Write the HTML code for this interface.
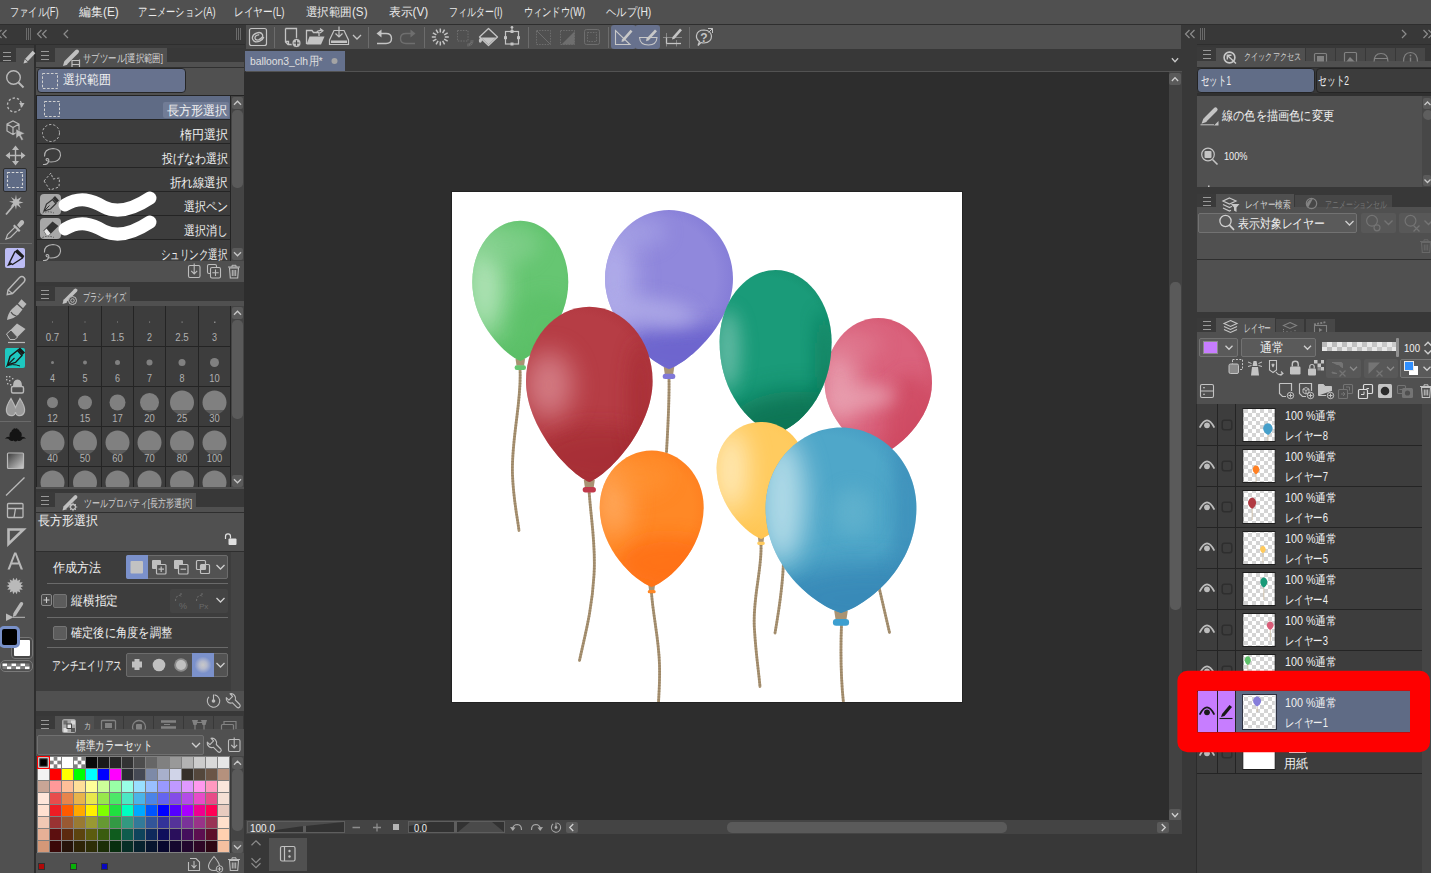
<!DOCTYPE html>
<html lang="ja"><head><meta charset="utf-8"><title>CLIP STUDIO PAINT</title>
<style>
html,body{margin:0;padding:0;background:#383838;}
body{width:1431px;height:873px;overflow:hidden;position:relative;font-family:"Liberation Sans",sans-serif;}
#app{position:absolute;left:0;top:0;width:1431px;height:873px;overflow:hidden;background:#383838;}
#app>div{position:absolute;box-sizing:border-box;}
#ov{position:absolute;left:0;top:0;}
#ov text{font-family:"Liberation Sans",sans-serif;}
</style></head><body>
<div id="app">
<div style="left:0px;top:0px;width:1431px;height:24px;background:#505050;"></div>
<div style="left:0px;top:24px;width:1431px;height:1px;background:#2e2e2e;"></div>
<div style="left:0px;top:44px;width:245px;height:1px;background:#2e2e2e;"></div>
<div style="left:1197px;top:44px;width:234px;height:1px;background:#2e2e2e;"></div>
<div style="left:34px;top:45px;width:2px;height:828px;background:#2e2e2e;"></div>
<div style="left:0px;top:45px;width:34px;height:3px;background:#3a3a3a;"></div>
<div style="left:0px;top:48px;width:34px;height:825px;background:#505050;"></div>
<div style="left:0px;top:48px;width:16px;height:14px;background:#3a3a3a;"></div>
<div style="left:3px;top:168px;width:24px;height:24px;background:#5f6b85;border:1px solid #2c2c2c;border-radius:2px;"></div>
<div style="left:0px;top:243px;width:32px;height:1px;background:#6a6a6a;"></div>
<div style="left:5px;top:248px;width:20px;height:20px;background:#bcbcf4;border-radius:2px;"></div>
<div style="left:5px;top:348px;width:20px;height:20px;background:#1ec8c0;border-radius:2px;"></div>
<div style="left:0px;top:421px;width:31px;height:1px;background:#6a6a6a;"></div>
<div style="left:11px;top:637px;width:22px;height:22px;background:#484848;border:1px solid #767676;border-radius:4px;"></div>
<div style="left:14px;top:640px;width:16px;height:16px;background:#ffffff;border-radius:1px;"></div>
<div style="left:-1px;top:626px;width:21px;height:22px;background:#000000;border:3px solid #7890c8;border-radius:5px;"></div>
<div style="left:0px;top:660px;width:33px;height:12px;background:#505050;border:1px solid #7a7a7a;border-radius:5px;"></div>
<div style="left:36px;top:45px;width:208px;height:3px;background:#3a3a3a;"></div>
<div style="left:36px;top:47px;width:19px;height:15px;background:#3a3a3a;"></div>
<div style="left:55px;top:48px;width:112px;height:15px;background:#505050;"></div>
<div style="left:36px;top:62px;width:208px;height:5px;background:#505050;"></div>
<div style="left:36px;top:67px;width:208px;height:28px;background:#505050;"></div>
<div style="left:36px;top:67px;width:208px;height:1px;background:#303030;"></div>
<div style="left:37px;top:68px;width:149px;height:25px;background:#67728e;border:1px solid #262626;border-radius:4px;"></div>
<div style="left:36px;top:95px;width:208px;height:166px;background:#242424;"></div>
<div style="left:37px;top:96px;width:193px;height:23px;background:#5f6b85;"></div>
<div style="left:163px;top:102px;width:66px;height:16px;background:#717c96;border-radius:2px;"></div>
<div style="left:37px;top:120px;width:193px;height:23px;background:#3d3d3d;"></div>
<div style="left:37px;top:144px;width:193px;height:23px;background:#3d3d3d;"></div>
<div style="left:37px;top:168px;width:193px;height:23px;background:#3d3d3d;"></div>
<div style="left:37px;top:192px;width:193px;height:23px;background:#3d3d3d;"></div>
<div style="left:37px;top:216px;width:193px;height:23px;background:#3d3d3d;"></div>
<div style="left:37px;top:240px;width:193px;height:21px;background:#3d3d3d;"></div>
<div style="left:231px;top:96px;width:13px;height:165px;background:#444444;"></div>
<div style="left:232px;top:97px;width:11px;height:12px;background:#5a5a5a;border-radius:2px;"></div>
<div style="left:232px;top:110px;width:11px;height:78px;background:#5a5a5a;border-radius:5px;"></div>
<div style="left:232px;top:248px;width:11px;height:12px;background:#5a5a5a;border-radius:2px;"></div>
<div style="left:40px;top:194px;width:21px;height:21px;background:#b0b0b0;border-radius:4px;opacity:.92;"></div>
<div style="left:40px;top:218px;width:21px;height:21px;background:#b0b0b0;border-radius:4px;opacity:.92;"></div>
<div style="left:36px;top:261px;width:208px;height:21px;background:#505050;"></div>
<div style="left:36px;top:286px;width:19px;height:15px;background:#3a3a3a;"></div>
<div style="left:55px;top:287px;width:75px;height:15px;background:#505050;"></div>
<div style="left:36px;top:301px;width:208px;height:5px;background:#505050;"></div>
<div style="left:36px;top:306px;width:208px;height:181px;background:#242424;"></div>
<div style="left:37px;top:306px;width:31px;height:40px;background:#3d3d3d;"></div>
<div style="left:69px;top:306px;width:32px;height:40px;background:#3d3d3d;"></div>
<div style="left:102px;top:306px;width:31px;height:40px;background:#3d3d3d;"></div>
<div style="left:134px;top:306px;width:31px;height:40px;background:#3d3d3d;"></div>
<div style="left:166px;top:306px;width:32px;height:40px;background:#3d3d3d;"></div>
<div style="left:199px;top:306px;width:31px;height:40px;background:#3d3d3d;"></div>
<div style="left:37px;top:347px;width:31px;height:39px;background:#3d3d3d;"></div>
<div style="left:69px;top:347px;width:32px;height:39px;background:#3d3d3d;"></div>
<div style="left:102px;top:347px;width:31px;height:39px;background:#3d3d3d;"></div>
<div style="left:134px;top:347px;width:31px;height:39px;background:#3d3d3d;"></div>
<div style="left:166px;top:347px;width:32px;height:39px;background:#3d3d3d;"></div>
<div style="left:199px;top:347px;width:31px;height:39px;background:#3d3d3d;"></div>
<div style="left:37px;top:387px;width:31px;height:39px;background:#3d3d3d;"></div>
<div style="left:69px;top:387px;width:32px;height:39px;background:#3d3d3d;"></div>
<div style="left:102px;top:387px;width:31px;height:39px;background:#3d3d3d;"></div>
<div style="left:134px;top:387px;width:31px;height:39px;background:#3d3d3d;"></div>
<div style="left:166px;top:387px;width:32px;height:39px;background:#3d3d3d;"></div>
<div style="left:199px;top:387px;width:31px;height:39px;background:#3d3d3d;"></div>
<div style="left:37px;top:427px;width:31px;height:39px;background:#3d3d3d;"></div>
<div style="left:69px;top:427px;width:32px;height:39px;background:#3d3d3d;"></div>
<div style="left:102px;top:427px;width:31px;height:39px;background:#3d3d3d;"></div>
<div style="left:134px;top:427px;width:31px;height:39px;background:#3d3d3d;"></div>
<div style="left:166px;top:427px;width:32px;height:39px;background:#3d3d3d;"></div>
<div style="left:199px;top:427px;width:31px;height:39px;background:#3d3d3d;"></div>
<div style="left:37px;top:467px;width:31px;height:20px;background:#3d3d3d;"></div>
<div style="left:69px;top:467px;width:32px;height:20px;background:#3d3d3d;"></div>
<div style="left:102px;top:467px;width:31px;height:20px;background:#3d3d3d;"></div>
<div style="left:134px;top:467px;width:31px;height:20px;background:#3d3d3d;"></div>
<div style="left:166px;top:467px;width:32px;height:20px;background:#3d3d3d;"></div>
<div style="left:199px;top:467px;width:31px;height:20px;background:#3d3d3d;"></div>
<div style="left:231px;top:306px;width:13px;height:182px;background:#444444;"></div>
<div style="left:36px;top:487px;width:208px;height:2px;background:#505050;"></div>
<div style="left:232px;top:307px;width:11px;height:12px;background:#5a5a5a;border-radius:2px;"></div>
<div style="left:232px;top:320px;width:11px;height:99px;background:#5a5a5a;border-radius:5px;"></div>
<div style="left:232px;top:475px;width:11px;height:12px;background:#5a5a5a;border-radius:2px;"></div>
<div style="left:36px;top:492px;width:19px;height:15px;background:#3a3a3a;"></div>
<div style="left:55px;top:493px;width:141px;height:15px;background:#505050;"></div>
<div style="left:36px;top:507px;width:208px;height:5px;background:#505050;"></div>
<div style="left:36px;top:512px;width:208px;height:1px;background:#2e2e2e;"></div>
<div style="left:36px;top:513px;width:208px;height:38px;background:#505050;"></div>
<div style="left:36px;top:551px;width:208px;height:1px;background:#2e2e2e;"></div>
<div style="left:36px;top:552px;width:208px;height:139px;background:#3d3d3d;"></div>
<div style="left:231px;top:552px;width:13px;height:139px;background:#444444;"></div>
<div style="left:126px;top:555px;width:102px;height:24px;background:#525252;border:1px solid #6c6c6c;border-radius:2px;"></div>
<div style="left:126px;top:555px;width:22px;height:24px;background:#7b91cb;border-radius:2px 0 0 2px;"></div>
<div style="left:47px;top:583px;width:181px;height:1px;background:#6a6a6a;"></div>
<div style="left:41px;top:594px;width:11px;height:12px;background:#4a4a4a;border:1px solid #8a8a8a;border-radius:2px;"></div>
<div style="left:53px;top:594px;width:14px;height:14px;background:#5c5c5c;border:1px solid #747474;border-radius:2px;"></div>
<div style="left:170px;top:589px;width:58px;height:24px;background:#444444;border-radius:2px;"></div>
<div style="left:47px;top:617px;width:181px;height:1px;background:#6a6a6a;"></div>
<div style="left:53px;top:626px;width:14px;height:14px;background:#5c5c5c;border:1px solid #747474;border-radius:2px;"></div>
<div style="left:47px;top:647px;width:181px;height:1px;background:#6a6a6a;"></div>
<div style="left:126px;top:653px;width:102px;height:24px;background:#525252;border:1px solid #6c6c6c;border-radius:2px;"></div>
<div style="left:192px;top:653px;width:22px;height:24px;background:#7b91cb;"></div>
<div style="left:36px;top:691px;width:208px;height:20px;background:#505050;"></div>
<div style="left:36px;top:716px;width:19px;height:14px;background:#3a3a3a;"></div>
<div style="left:55px;top:716px;width:39px;height:14px;background:#505050;"></div>
<div style="left:94px;top:716px;width:29px;height:14px;background:#474747;"></div>
<div style="left:124px;top:716px;width:29px;height:14px;background:#474747;"></div>
<div style="left:154px;top:716px;width:29px;height:14px;background:#474747;"></div>
<div style="left:184px;top:716px;width:29px;height:14px;background:#474747;"></div>
<div style="left:214px;top:716px;width:29px;height:14px;background:#474747;"></div>
<div style="left:36px;top:729px;width:208px;height:27px;background:#505050;"></div>
<div style="left:37px;top:735px;width:167px;height:20px;background:#5a5a5a;border:1px solid #707070;border-radius:2px;"></div>
<div style="left:37px;top:756px;width:193px;height:97px;background:#808080;"></div>
<div style="left:231px;top:756px;width:13px;height:97px;background:#444444;"></div>
<div style="left:232px;top:757px;width:11px;height:12px;background:#5a5a5a;border-radius:2px;"></div>
<div style="left:232px;top:769px;width:11px;height:62px;background:#5a5a5a;border-radius:5px;"></div>
<div style="left:232px;top:841px;width:11px;height:12px;background:#5a5a5a;border-radius:2px;"></div>
<div style="left:36px;top:853px;width:208px;height:20px;background:#505050;"></div>
<div style="left:38px;top:863px;width:7px;height:7px;background:#b00808;border:1px solid #303030;"></div>
<div style="left:70px;top:863px;width:7px;height:7px;background:#08b008;border:1px solid #303030;"></div>
<div style="left:101px;top:863px;width:7px;height:7px;background:#0808c0;border:1px solid #303030;"></div>
<div style="left:246px;top:25px;width:935px;height:24px;background:#505050;"></div>
<div style="left:274px;top:27px;width:1px;height:21px;background:#6c6c6c;"></div>
<div style="left:368px;top:27px;width:1px;height:21px;background:#6c6c6c;"></div>
<div style="left:424px;top:27px;width:1px;height:21px;background:#6c6c6c;"></div>
<div style="left:528px;top:27px;width:1px;height:21px;background:#6c6c6c;"></div>
<div style="left:608px;top:27px;width:1px;height:21px;background:#6c6c6c;"></div>
<div style="left:611px;top:25px;width:25px;height:24px;background:#67718d;border-radius:3px;"></div>
<div style="left:635px;top:25px;width:25px;height:24px;background:#67718d;border-radius:3px;"></div>
<div style="left:689px;top:27px;width:1px;height:21px;background:#6c6c6c;"></div>
<div style="left:245px;top:51px;width:100px;height:20px;background:#65718d;"></div>
<div style="left:246px;top:71px;width:936px;height:1px;background:#525252;"></div>
<div style="left:244px;top:72px;width:925px;height:748px;background:#2d2d2d;"></div>
<div style="left:451px;top:191px;width:512px;height:512px;background:#ffffff;border:1px solid #222222;"></div>
<div style="left:1169px;top:72px;width:13px;height:748px;background:#424242;"></div>
<div style="left:1169px;top:73px;width:12px;height:12px;background:#5a5a5a;border-radius:2px;"></div>
<div style="left:1170px;top:282px;width:11px;height:328px;background:#5a5a5a;border-radius:5px;"></div>
<div style="left:1169px;top:809px;width:12px;height:12px;background:#5a5a5a;border-radius:2px;"></div>
<div style="left:246px;top:820px;width:936px;height:14px;background:#444444;"></div>
<div style="left:247px;top:821px;width:98px;height:12px;background:#323232;border:1px solid #5e5e5e;"></div>
<div style="left:303px;top:821px;width:3px;height:12px;background:#5e5e5e;"></div>
<div style="left:408px;top:821px;width:97px;height:12px;background:#323232;border:1px solid #5e5e5e;"></div>
<div style="left:454px;top:821px;width:3px;height:12px;background:#5e5e5e;"></div>
<div style="left:566px;top:822px;width:12px;height:11px;background:#5a5a5a;border-radius:2px;"></div>
<div style="left:727px;top:822px;width:280px;height:11px;background:#5a5a5a;border-radius:5px;"></div>
<div style="left:1157px;top:822px;width:12px;height:11px;background:#5a5a5a;border-radius:2px;"></div>
<div style="left:269px;top:838px;width:38px;height:33px;background:#505050;"></div>
<div style="left:1196px;top:404px;width:1px;height:469px;background:#2c2c2c;"></div>
<div style="left:1197px;top:47px;width:19px;height:14px;background:#3a3a3a;"></div>
<div style="left:1216px;top:48px;width:89px;height:14px;background:#505050;"></div>
<div style="left:1306px;top:48px;width:29px;height:14px;background:#474747;"></div>
<div style="left:1336px;top:48px;width:29px;height:14px;background:#474747;"></div>
<div style="left:1366px;top:48px;width:29px;height:14px;background:#474747;"></div>
<div style="left:1396px;top:48px;width:29px;height:14px;background:#474747;"></div>
<div style="left:1197px;top:61px;width:234px;height:6px;background:#505050;"></div>
<div style="left:1197px;top:67px;width:234px;height:1px;background:#303030;"></div>
<div style="left:1197px;top:68px;width:118px;height:25px;background:#616d87;border:1px solid #242424;border-radius:4px;"></div>
<div style="left:1316px;top:68px;width:120px;height:25px;background:#3c3c3c;border:1px solid #242424;border-radius:4px;"></div>
<div style="left:1197px;top:93px;width:234px;height:3px;background:#303030;"></div>
<div style="left:1197px;top:96px;width:225px;height:91px;background:#505050;"></div>
<div style="left:1422px;top:96px;width:9px;height:91px;background:#474747;"></div>
<div style="left:1423px;top:98px;width:8px;height:11px;background:#5a5a5a;border-radius:2px;"></div>
<div style="left:1423px;top:110px;width:10px;height:10px;background:#5e5e5e;border-radius:5px;"></div>
<div style="left:1423px;top:175px;width:8px;height:11px;background:#5a5a5a;border-radius:2px;"></div>
<div style="left:1197px;top:194px;width:19px;height:14px;background:#3a3a3a;"></div>
<div style="left:1216px;top:194px;width:78px;height:14px;background:#505050;"></div>
<div style="left:1295px;top:195px;width:97px;height:13px;background:#474747;"></div>
<div style="left:1197px;top:207px;width:234px;height:5px;background:#505050;"></div>
<div style="left:1197px;top:212px;width:234px;height:47px;background:#505050;"></div>
<div style="left:1198px;top:213px;width:159px;height:20px;background:#5a5a5a;border:1px solid #727272;border-radius:2px;"></div>
<div style="left:1361px;top:213px;width:35px;height:20px;background:#585858;border-radius:2px;"></div>
<div style="left:1399px;top:213px;width:35px;height:20px;background:#585858;border-radius:2px;"></div>
<div style="left:1197px;top:259px;width:234px;height:1px;background:#2e2e2e;"></div>
<div style="left:1197px;top:260px;width:234px;height:52px;background:#505050;"></div>
<div style="left:1197px;top:318px;width:19px;height:14px;background:#3a3a3a;"></div>
<div style="left:1216px;top:318px;width:59px;height:15px;background:#505050;"></div>
<div style="left:1276px;top:319px;width:28px;height:14px;background:#474747;"></div>
<div style="left:1306px;top:319px;width:29px;height:14px;background:#474747;"></div>
<div style="left:1197px;top:332px;width:234px;height:72px;background:#505050;"></div>
<div style="left:1199px;top:338px;width:39px;height:19px;background:#5a5a5a;border:1px solid #727272;border-radius:2px;"></div>
<div style="left:1203px;top:341px;width:15px;height:13px;background:#c77dff;border:1px solid #8a8a8a;"></div>
<div style="left:1241px;top:338px;width:75px;height:19px;background:#5a5a5a;border:1px solid #727272;border-radius:2px;"></div>
<div style="left:1396px;top:338px;width:3px;height:19px;background:#909090;border-radius:1px;"></div>
<div style="left:1326px;top:359px;width:35px;height:19px;background:#585858;border-radius:2px;"></div>
<div style="left:1364px;top:359px;width:34px;height:19px;background:#585858;border-radius:2px;"></div>
<div style="left:1400px;top:359px;width:36px;height:19px;background:#5a5a5a;border:1px solid #767676;border-radius:2px;"></div>
<div style="left:1409px;top:366px;width:9px;height:9px;background:#ffffff;"></div>
<div style="left:1404px;top:361px;width:10px;height:10px;background:#2f8fff;border:1px solid #e8e8e8;"></div>
<div style="left:1197px;top:404px;width:225px;height:469px;background:#3d3d3d;"></div>
<div style="left:1422px;top:404px;width:9px;height:469px;background:#454545;"></div>
<div style="left:1197px;top:445px;width:225px;height:1px;background:#242424;"></div>
<div style="left:1217px;top:404px;width:1px;height:41px;background:#242424;"></div>
<div style="left:1235px;top:404px;width:1px;height:41px;background:#242424;"></div>
<div style="left:1197px;top:486px;width:225px;height:1px;background:#242424;"></div>
<div style="left:1217px;top:445px;width:1px;height:41px;background:#242424;"></div>
<div style="left:1235px;top:445px;width:1px;height:41px;background:#242424;"></div>
<div style="left:1197px;top:527px;width:225px;height:1px;background:#242424;"></div>
<div style="left:1217px;top:486px;width:1px;height:41px;background:#242424;"></div>
<div style="left:1235px;top:486px;width:1px;height:41px;background:#242424;"></div>
<div style="left:1197px;top:568px;width:225px;height:1px;background:#242424;"></div>
<div style="left:1217px;top:527px;width:1px;height:41px;background:#242424;"></div>
<div style="left:1235px;top:527px;width:1px;height:41px;background:#242424;"></div>
<div style="left:1197px;top:609px;width:225px;height:1px;background:#242424;"></div>
<div style="left:1217px;top:568px;width:1px;height:41px;background:#242424;"></div>
<div style="left:1235px;top:568px;width:1px;height:41px;background:#242424;"></div>
<div style="left:1197px;top:650px;width:225px;height:1px;background:#242424;"></div>
<div style="left:1217px;top:609px;width:1px;height:41px;background:#242424;"></div>
<div style="left:1235px;top:609px;width:1px;height:41px;background:#242424;"></div>
<div style="left:1197px;top:691px;width:225px;height:1px;background:#242424;"></div>
<div style="left:1217px;top:650px;width:1px;height:41px;background:#242424;"></div>
<div style="left:1235px;top:650px;width:1px;height:41px;background:#242424;"></div>
<div style="left:1197px;top:732px;width:225px;height:1px;background:#242424;"></div>
<div style="left:1217px;top:691px;width:1px;height:41px;background:#242424;"></div>
<div style="left:1235px;top:691px;width:1px;height:41px;background:#242424;"></div>
<div style="left:1198px;top:691px;width:19px;height:41px;background:#c77dff;"></div>
<div style="left:1218px;top:691px;width:17px;height:41px;background:#c77dff;"></div>
<div style="left:1236px;top:691px;width:175px;height:41px;background:#5f6b85;"></div>
<div style="left:1411px;top:691px;width:11px;height:41px;background:#5f6b85;"></div>
<div style="left:1197px;top:773px;width:225px;height:1px;background:#242424;"></div>
<div style="left:1217px;top:732px;width:1px;height:41px;background:#242424;"></div>
<div style="left:1235px;top:732px;width:1px;height:41px;background:#242424;"></div>
<svg id="ov" width="1431" height="873" viewBox="0 0 1431 873">
<text x="10" y="15.8" font-size="12" fill="#eaeaea" text-anchor="start" textLength="48.5" lengthAdjust="spacingAndGlyphs">ファイル(F)</text>
<text x="79.2" y="15.8" font-size="12" fill="#eaeaea" text-anchor="start" textLength="39.6" lengthAdjust="spacingAndGlyphs">編集(E)</text>
<text x="138.4" y="15.8" font-size="12" fill="#eaeaea" text-anchor="start" textLength="77.2" lengthAdjust="spacingAndGlyphs">アニメーション(A)</text>
<text x="234.2" y="15.8" font-size="12" fill="#eaeaea" text-anchor="start" textLength="50.3" lengthAdjust="spacingAndGlyphs">レイヤー(L)</text>
<text x="305.5" y="15.8" font-size="12" fill="#eaeaea" text-anchor="start" textLength="62" lengthAdjust="spacingAndGlyphs">選択範囲(S)</text>
<text x="389" y="15.8" font-size="12" fill="#eaeaea" text-anchor="start" textLength="39.3" lengthAdjust="spacingAndGlyphs">表示(V)</text>
<text x="449.2" y="15.8" font-size="12" fill="#eaeaea" text-anchor="start" textLength="53.2" lengthAdjust="spacingAndGlyphs">フィルター(I)</text>
<text x="523.5" y="15.8" font-size="12" fill="#eaeaea" text-anchor="start" textLength="61.6" lengthAdjust="spacingAndGlyphs">ウィンドウ(W)</text>
<text x="606" y="15.8" font-size="12" fill="#eaeaea" text-anchor="start" textLength="45.3" lengthAdjust="spacingAndGlyphs">ヘルプ(H)</text>
<path d="M1.5,30.0 L-2.5,34 L1.5,38.0" fill="none" stroke="#8c8c8c" stroke-width="1.2"/>
<path d="M6.5,30.0 L2.5,34 L6.5,38.0" fill="none" stroke="#8c8c8c" stroke-width="1.2"/>
<rect x="26" y="28" width="1" height="12" fill="#6a6a6a"/>
<rect x="28" y="28" width="1" height="12" fill="#6a6a6a"/>
<rect x="30" y="28" width="1" height="12" fill="#6a6a6a"/>
<path d="M41.5,30.0 L37.5,34 L41.5,38.0" fill="none" stroke="#8c8c8c" stroke-width="1.2"/>
<path d="M46.5,30.0 L42.5,34 L46.5,38.0" fill="none" stroke="#8c8c8c" stroke-width="1.2"/>
<path d="M68.0,30.0 L64.0,34 L68.0,38.0" fill="none" stroke="#8c8c8c" stroke-width="1.2"/>
<rect x="236" y="28" width="1" height="12" fill="#6a6a6a"/>
<rect x="238" y="28" width="1" height="12" fill="#6a6a6a"/>
<rect x="240" y="28" width="1" height="12" fill="#6a6a6a"/>
<rect x="3" y="52" width="8" height="1" fill="#989898"/>
<rect x="3" y="56" width="8" height="1" fill="#989898"/>
<rect x="3" y="60" width="8" height="1" fill="#989898"/>
<path d="M34,52 L26.5,60" stroke="#c4c4c4" stroke-width="3.600"/><path d="M23.500,63.500 L24.800,59.300 L27.800,62.200 Z" fill="#c4c4c4"/>
<circle cx="13.5" cy="77.5" r="6.8" fill="none" stroke="#b9b9b9" stroke-width="1.4"/><path d="M18.5,82.5 L23.5,87.5" stroke="#b9b9b9" stroke-width="2"/>
<circle cx="14.5" cy="105" r="7" fill="none" stroke="#b9b9b9" stroke-width="1.3" stroke-dasharray="2.4 2"/><path d="M19,103 L24.5,103 L21.8,107.5 Z" fill="#b9b9b9"/>
<path d="M7,124 L13,121 L19,124 L19,131 L13,134.5 L7,131 Z M7,124 L13,127.5 L19,124 M13,127.5 L13,134.5" fill="none" stroke="#b9b9b9" stroke-width="1.2"/><path d="M16,129 L25,133.5 L21,135 L23.5,139.5 L21.5,140.5 L19,136 L16,138.5 Z" fill="#b9b9b9" stroke="#505050" stroke-width="0.6"/>
<path d="M15.500,148 L15.500,163 M8,155.5 L23,155.5" stroke="#b9b9b9" stroke-width="1.4"/><path d="M12,150 L15.500,145.500 L19,150 Z M12,161 L15.500,165.500 L19,161 Z M10,152 L5.500,155.500 L10,159 Z M21,152 L25.500,155.500 L21,159 Z" fill="#b9b9b9"/>
<rect x="7.5" y="172.5" width="15" height="15" fill="none" stroke="#d8d8d8" stroke-width="1.1" stroke-dasharray="2.6 1.6"/>
<path d="M6,214.5 L14.5,204.5" stroke="#b9b9b9" stroke-width="1.8"/><path d="M16,194.5 L16.8,199.5 L21.5,197 L18.8,201.2 L23.5,202.5 L18.8,203.8 L21,208 L16.8,205 L16,209.8 L14.8,205 L10.5,207 L13.2,203 L9,201.5 L13.5,201 L11,197 L15,199.5 Z" fill="#b9b9b9"/>
<path d="M6,239 L7.5,234.5 L15.5,226.5 L18.5,229.5 L10.5,237.5 Z" fill="none" stroke="#b9b9b9" stroke-width="1.2"/><path d="M14.5,224.5 L20.5,230.5 L19,232 L13,226 Z M17,225 L20.5,220.5 Q22.5,219.5 23.7,221 Q24.8,222.5 23.5,224.2 L19.5,228 Z" fill="#b9b9b9"/>
<path d="M15,251.500 L9.500,262.500 L12.500,264.500 L22.500,258" fill="none" stroke="#1c1c1c" stroke-width="1.400" stroke-linejoin="round"/><path d="M14.500,251.500 L17.500,249.300 L24.300,256 L22.800,258.800 Z" fill="#1c1c1c"/><path d="M7,266.200 L9,262.300 L11.800,264.600 Z" fill="#1c1c1c"/>
<path d="M8,290 L19.5,277.5 Q22,275.5 24,277.5 Q26,279.5 24,282 L12.5,293.5 L7.2,294.5 Z" fill="none" stroke="#b9b9b9" stroke-width="1.4"/><path d="M8,290 L12.5,293.5" stroke="#b9b9b9" stroke-width="1.2"/>
<path d="M7,320 Q8,313 12,309 L17,304.500 L22.500,309.500 L18.500,314.500 Q14,318.500 7,320 Z" fill="#b9b9b9"/><path d="M11,312 Q13,315.500 16.500,316" fill="none" stroke="#505050" stroke-width="1.100"/><path d="M18,303.500 L21.500,299.300 L26.500,304 L23,308.200 Z" fill="#b9b9b9"/>
<path d="M6.5,334 L17,323.5 L25.5,329 L15,339.5 L10,339.5 Z" fill="#b9b9b9"/><path d="M6.5,334 L10,339.5 L15,339.5 L17.5,337 L11,330 Z" fill="#505050" stroke="#b9b9b9" stroke-width="1"/><path d="M8,342.5 L25,342.5" stroke="#b9b9b9" stroke-width="1.2"/>
<path d="M7.5,365 L10,356.5 L17.5,350.5 L22,355.5 L15.5,362.5 Z" fill="none" stroke="#1a1a1a" stroke-width="1.4"/><path d="M17.5,349.8 L20,347.5 L25,352.5 L22.5,355 Z" fill="#1a1a1a"/><path d="M8,364.5 L14.5,358" stroke="#1a1a1a" stroke-width="1.1"/><path d="M6,366.5 Q12,363 20,366" fill="none" stroke="#1a1a1a" stroke-width="1"/>
<rect x="11.5" y="386.5" width="12" height="6.5" rx="1.5" fill="#505050" stroke="#b9b9b9" stroke-width="1.4"/><path d="M13,386 Q13,379.5 17.5,379.5 Q22,379.5 22,386 Z" fill="#b9b9b9"/>
<rect x="6" y="376" width="1.4" height="1.4" fill="#b9b9b9"/>
<rect x="9" y="376" width="1.4" height="1.4" fill="#b9b9b9"/>
<rect x="6" y="379" width="1.4" height="1.4" fill="#b9b9b9"/>
<rect x="9" y="380" width="1.4" height="1.4" fill="#b9b9b9"/>
<rect x="12" y="378" width="1.4" height="1.4" fill="#b9b9b9"/>
<rect x="7" y="383" width="1.4" height="1.4" fill="#b9b9b9"/>
<rect x="10" y="384" width="1.4" height="1.4" fill="#b9b9b9"/>
<path d="M11,398.5 Q5.5,407 6.5,411.5 Q8,416.5 13,415.5 Q15,415 15.5,412 Q16,415 18,415.5 Q23,416.5 24.5,411.5 Q25.5,407 20,398.5 Q17,404 15.5,407.5 Q14,404 11,398.5 Z" fill="#9a9a9a" stroke="#b9b9b9" stroke-width="1.2"/>
<path d="M9.500,437 Q9,432.500 11.500,431.500 Q11.800,429.200 13.200,429.500 Q13.800,427.300 15.500,428.800 Q17,427.200 17.800,429.500 Q19.500,429 19.500,431.300 Q22.500,432.500 21.500,437 Q24,436 26,438.800 Q23,438 21.500,440 Q19.500,441.800 17.500,440.500 Q15.500,442.500 13.500,440.500 Q11.500,441.800 9.500,440 Q8,438 5,438.800 Q7,436 9.500,437 Z" fill="#141414"/>
<defs><linearGradient id="gsq" x1="0" y1="0" x2="1" y2="1"><stop offset="0" stop-color="#3a3a3a"/><stop offset="1" stop-color="#d0d0d0"/></linearGradient></defs>
<rect x="7.5" y="453" width="16" height="15.5" rx="1" fill="url(#gsq)" stroke="#b9b9b9" stroke-width="1.2"/>
<path d="M6,495.5 L24.5,477.5" stroke="#b9b9b9" stroke-width="1.3"/>
<rect x="7.5" y="503.5" width="15.5" height="14" rx="1" fill="none" stroke="#b9b9b9" stroke-width="1.3"/><path d="M7.5,508.5 L23,508.5 M15.5,508.5 L14,517.5" stroke="#b9b9b9" stroke-width="1.3"/>
<path d="M8.500,529.500 L23.500,529.500 L8.500,544 Z" fill="none" stroke="#b9b9b9" stroke-width="2.600"/>
<path d="M7.5,569.5 L14.2,552.5 L16.3,552.5 L23,569.5 L20.7,569.5 L18.8,564.5 L11.7,564.5 L9.8,569.5 Z M12.4,562.6 L18.1,562.6 L15.25,555 Z" fill="#b9b9b9" fill-rule="evenodd"/>
<polygon points="23.5,586.0 20.7,587.3 22.7,589.7 19.5,589.6 20.3,592.6 17.5,591.2 16.9,594.3 15.0,591.8 13.1,594.3 12.5,591.2 9.7,592.6 10.5,589.6 7.3,589.7 9.3,587.3 6.5,586.0 9.3,584.7 7.3,582.3 10.5,582.4 9.7,579.4 12.5,580.8 13.1,577.7 15.0,580.2 16.9,577.7 17.5,580.8 20.3,579.4 19.5,582.4 22.7,582.3 20.7,584.7" fill="#b9b9b9"/>
<path d="M6,613.500 L13.500,617.300 L6,621 Z" fill="#b9b9b9"/><path d="M13,617.300 L25,617.300" stroke="#b9b9b9" stroke-width="1"/><path d="M15.200,613.500 L21.500,603.800" stroke="#b9b9b9" stroke-width="3.400" stroke-linecap="round"/><path d="M12.800,617 L13.500,613.200 L16.500,615.200 Z" fill="#b9b9b9"/>
<rect x="2.5" y="663.5" width="4.5" height="2.8" fill="#ffffff"/>
<rect x="2.5" y="666.3" width="4.5" height="2.8" fill="#7c7c7c"/>
<rect x="7.0" y="666.3" width="4.5" height="2.8" fill="#ffffff"/>
<rect x="7.0" y="663.5" width="4.5" height="2.8" fill="#7c7c7c"/>
<rect x="11.5" y="663.5" width="4.5" height="2.8" fill="#ffffff"/>
<rect x="11.5" y="666.3" width="4.5" height="2.8" fill="#7c7c7c"/>
<rect x="16.0" y="666.3" width="4.5" height="2.8" fill="#ffffff"/>
<rect x="16.0" y="663.5" width="4.5" height="2.8" fill="#7c7c7c"/>
<rect x="20.5" y="663.5" width="4.5" height="2.8" fill="#ffffff"/>
<rect x="20.5" y="666.3" width="4.5" height="2.8" fill="#7c7c7c"/>
<rect x="25.0" y="666.3" width="4.5" height="2.8" fill="#ffffff"/>
<rect x="25.0" y="663.5" width="4.5" height="2.8" fill="#7c7c7c"/>
<rect x="41" y="51" width="8" height="1" fill="#989898"/>
<rect x="41" y="55" width="8" height="1" fill="#989898"/>
<rect x="41" y="59" width="8" height="1" fill="#989898"/>
<text x="83" y="61.5" font-size="10.5" fill="#d4d4d4" text-anchor="start" textLength="80" lengthAdjust="spacingAndGlyphs">サブツール[選択範囲]</text>
<path d="M77,51.5 L66,62.5" stroke="#c0c0c0" stroke-width="4" stroke-linecap="round"/><path d="M63,66 L64.2,61.5 L67.5,64.8 Z" fill="#c0c0c0"/><path d="M71.500,60.5 L79.5,60.5 M71.500,64.5 L79.5,64.5 M79.500,59.500 L79.500,67 M72,60 L72,67" stroke="#c0c0c0" stroke-width="1.2" fill="none"/>
<rect x="42.5" y="73.5" width="15" height="15" fill="none" stroke="#d0d0d0" stroke-width="1" stroke-dasharray="2.6 1.6"/>
<text x="63" y="84" font-size="13" fill="#f0f0f0" text-anchor="start" textLength="48" lengthAdjust="spacingAndGlyphs">選択範囲</text>
<text x="227.5" y="115" font-size="13" fill="#f0f0f0" text-anchor="end" textLength="61" lengthAdjust="spacingAndGlyphs">長方形選択</text>
<text x="227.5" y="139" font-size="13" fill="#f0f0f0" text-anchor="end" textLength="48" lengthAdjust="spacingAndGlyphs">楕円選択</text>
<text x="227.5" y="163" font-size="13" fill="#f0f0f0" text-anchor="end" textLength="66" lengthAdjust="spacingAndGlyphs">投げなわ選択</text>
<text x="227.5" y="187" font-size="13" fill="#f0f0f0" text-anchor="end" textLength="58" lengthAdjust="spacingAndGlyphs">折れ線選択</text>
<text x="227.5" y="211" font-size="13" fill="#f0f0f0" text-anchor="end" textLength="44" lengthAdjust="spacingAndGlyphs">選択ペン</text>
<text x="227.5" y="235" font-size="13" fill="#f0f0f0" text-anchor="end" textLength="44" lengthAdjust="spacingAndGlyphs">選択消し</text>
<text x="227.5" y="259" font-size="13" fill="#f0f0f0" text-anchor="end" textLength="67" lengthAdjust="spacingAndGlyphs">シュリンク選択</text>
<path d="M234.0,104.75 L237.5,101.25 L241.0,104.75" fill="none" stroke="#c8c8c8" stroke-width="1.3"/>
<path d="M234.0,252.25 L237.5,255.75 L241.0,252.25" fill="none" stroke="#c8c8c8" stroke-width="1.3"/>
<rect x="44.5" y="101.5" width="15" height="15" fill="none" stroke="#d0d0d0" stroke-width="1" stroke-dasharray="2.6 1.6"/>
<circle cx="51" cy="133" r="8.5" fill="none" stroke="#b4b4b4" stroke-width="1" stroke-dasharray="2.4 1.8"/>
<path d="M44.5,156.5 Q44,149 53,148.5 Q61,149 60.5,155.5 Q59.5,162 51,162 Q48,162 47,160.5 M46.8,160.8 Q45,158.5 47.5,158.5 Q49.5,159 48.5,162 Q47,165 43,164.5" fill="none" stroke="#b4b4b4" stroke-width="1.1"/>
<path d="M44,181 L51,173 L53,179 L59.5,178 L59,187 L50,190 Z" fill="none" stroke="#b4b4b4" stroke-width="1" stroke-dasharray="2.4 1.8"/>
<path d="M65,205 C80,196 92,200 104,207 C118,214 135,208 150,198" fill="none" stroke="#ffffff" stroke-width="13" stroke-linecap="round"/>
<path d="M65,229 C80,220 92,224 104,231 C118,238 135,232 150,222" fill="none" stroke="#ffffff" stroke-width="13" stroke-linecap="round"/>
<path d="M44,211 L46.5,204 L52.5,199.5 L56,203.5 L50.5,209 Z" fill="none" stroke="#333" stroke-width="1.2"/><path d="M52.5,198.5 L55,196 L59,200.5 L56.5,203 Z" fill="#333"/><path d="M44.5,210.5 L49.5,205.5" stroke="#333" stroke-width="1"/><path d="M42.5,213 Q48,210.5 54,213" stroke="#555" fill="none" stroke-dasharray="1.5 1.2"/>
<path d="M43.5,230.5 L52.5,221.5 L58.5,226 L49.5,235 L46,235 Z" fill="#333"/><path d="M44,231 L46.5,235 L49,235 L50.5,233.5 L46.5,228.5 Z" fill="#e8e8e8"/><path d="M42.5,237.5 Q48,235 54,237.5" stroke="#555" fill="none" stroke-dasharray="1.5 1.2"/>
<path d="M44.5,252.5 Q44,245 53,244.5 Q61,245 60.5,251.5 Q59.5,258 51,258 Q48,258 47,256.5 M46.8,256.8 Q45,254.5 47.5,254.5 Q49.5,255 48.5,258 Q47,261 43,260.5" fill="none" stroke="#b4b4b4" stroke-width="1.1"/>
<rect x="188.5" y="265.5" width="11.5" height="12" rx="1.5" fill="none" stroke="#bdbdbd" stroke-width="1.1"/><path d="M194.2,263.5 L194.2,273.5 M191.2,270.8 L194.2,274 L197.2,270.8" fill="none" stroke="#bdbdbd" stroke-width="1.1"/>
<rect x="207.5" y="264.5" width="9" height="9" rx="1.5" fill="none" stroke="#bdbdbd" stroke-width="1.1"/><rect x="210.5" y="267.5" width="10" height="10.5" rx="1.5" fill="#505050" stroke="#bdbdbd" stroke-width="1.1"/><path d="M215.5,269.5 L215.5,276 M212.3,272.8 L218.7,272.8" stroke="#bdbdbd" stroke-width="1.1"/>
<path d="M229.5,268.0 L230.3,278.0 L237.7,278.0 L238.5,268.0 Z" fill="none" stroke="#bdbdbd" stroke-width="1.1"/><path d="M228,267.0 L240,267.0 M232,267.0 L232,265.3 L236,265.3 L236,267.0 M232.3,270.0 L232.3,276.0 M234,270.0 L234,276.0 M235.7,270.0 L235.7,276.0" fill="none" stroke="#bdbdbd" stroke-width="1"/>
<rect x="41" y="290" width="8" height="1" fill="#989898"/>
<rect x="41" y="294" width="8" height="1" fill="#989898"/>
<rect x="41" y="298" width="8" height="1" fill="#989898"/>
<text x="83" y="300.5" font-size="10.5" fill="#d4d4d4" text-anchor="start" textLength="43" lengthAdjust="spacingAndGlyphs">ブラシサイズ</text>
<path d="M75.500,290.500 L65.500,300.500" stroke="#c0c0c0" stroke-width="3.800" stroke-linecap="round"/><path d="M62.500,304 L63.700,299.500 L67,302.800 Z" fill="#c0c0c0"/><circle cx="72.5" cy="300.5" r="4" fill="#505050" stroke="#c0c0c0" stroke-width="1"/><circle cx="72.5" cy="300.5" r="1.8" fill="none" stroke="#c0c0c0" stroke-width="0.9"/>
<defs><clipPath id="bclip"><rect x="36" y="306" width="195" height="181"/></clipPath></defs>
<g clip-path="url(#bclip)">
<rect x="52.0" y="321.5" width="1.0" height="1.0" fill="#8a8a8a"/>
<text x="52.5" y="341" font-size="11.5" fill="#b0b0b0" text-anchor="middle" textLength="13.5" lengthAdjust="spacingAndGlyphs">0.7</text>
<rect x="84.5" y="321.5" width="1.0" height="1.0" fill="#8a8a8a"/>
<text x="85.0" y="341" font-size="11.5" fill="#b0b0b0" text-anchor="middle" textLength="5" lengthAdjust="spacingAndGlyphs">1</text>
<rect x="117.0" y="321.5" width="1.0" height="1.0" fill="#8a8a8a"/>
<text x="117.5" y="341" font-size="11.5" fill="#b0b0b0" text-anchor="middle" textLength="13.5" lengthAdjust="spacingAndGlyphs">1.5</text>
<rect x="149.0" y="321.5" width="1.1" height="1.1" fill="#8a8a8a"/>
<text x="149.5" y="341" font-size="11.5" fill="#b0b0b0" text-anchor="middle" textLength="5" lengthAdjust="spacingAndGlyphs">2</text>
<rect x="181.5" y="321.5" width="1.2" height="1.2" fill="#8a8a8a"/>
<text x="182.0" y="341" font-size="11.5" fill="#b0b0b0" text-anchor="middle" textLength="13.5" lengthAdjust="spacingAndGlyphs">2.5</text>
<rect x="214.0" y="321.5" width="1.5" height="1.5" fill="#8a8a8a"/>
<text x="214.5" y="341" font-size="11.5" fill="#b0b0b0" text-anchor="middle" textLength="5" lengthAdjust="spacingAndGlyphs">3</text>
<circle cx="52.5" cy="362.5" r="1.5" fill="#808080"/>
<text x="52.5" y="382" font-size="11.5" fill="#b0b0b0" text-anchor="middle" textLength="5" lengthAdjust="spacingAndGlyphs">4</text>
<circle cx="85.0" cy="362.5" r="2.0" fill="#808080"/>
<text x="85.0" y="382" font-size="11.5" fill="#b0b0b0" text-anchor="middle" textLength="5" lengthAdjust="spacingAndGlyphs">5</text>
<circle cx="117.5" cy="362.5" r="2.5" fill="#808080"/>
<text x="117.5" y="382" font-size="11.5" fill="#b0b0b0" text-anchor="middle" textLength="5" lengthAdjust="spacingAndGlyphs">6</text>
<circle cx="149.5" cy="362.5" r="3.0" fill="#808080"/>
<text x="149.5" y="382" font-size="11.5" fill="#b0b0b0" text-anchor="middle" textLength="5" lengthAdjust="spacingAndGlyphs">7</text>
<circle cx="182.0" cy="362.5" r="3.5" fill="#808080"/>
<text x="182.0" y="382" font-size="11.5" fill="#b0b0b0" text-anchor="middle" textLength="5" lengthAdjust="spacingAndGlyphs">8</text>
<circle cx="214.5" cy="362.5" r="4.5" fill="#808080"/>
<text x="214.5" y="382" font-size="11.5" fill="#b0b0b0" text-anchor="middle" textLength="10.5" lengthAdjust="spacingAndGlyphs">10</text>
<circle cx="52.5" cy="402.5" r="5.5" fill="#808080"/>
<text x="52.5" y="422" font-size="11.5" fill="#b0b0b0" text-anchor="middle" textLength="10.5" lengthAdjust="spacingAndGlyphs">12</text>
<circle cx="85.0" cy="402.5" r="7.0" fill="#808080"/>
<text x="85.0" y="422" font-size="11.5" fill="#b0b0b0" text-anchor="middle" textLength="10.5" lengthAdjust="spacingAndGlyphs">15</text>
<circle cx="117.5" cy="402.5" r="8.0" fill="#808080"/>
<text x="117.5" y="422" font-size="11.5" fill="#b0b0b0" text-anchor="middle" textLength="10.5" lengthAdjust="spacingAndGlyphs">17</text>
<circle cx="149.5" cy="402.5" r="9.5" fill="#808080"/>
<rect x="134" y="410" width="31" height="16" fill="#3d3d3d" opacity="0.55"/>
<text x="149.5" y="422" font-size="11.5" fill="#b0b0b0" text-anchor="middle" textLength="10.5" lengthAdjust="spacingAndGlyphs">20</text>
<circle cx="182.0" cy="402.5" r="12.0" fill="#808080"/>
<rect x="166" y="410" width="32" height="16" fill="#3d3d3d" opacity="0.55"/>
<text x="182.0" y="422" font-size="11.5" fill="#b0b0b0" text-anchor="middle" textLength="10.5" lengthAdjust="spacingAndGlyphs">25</text>
<circle cx="214.5" cy="402.5" r="12.0" fill="#808080"/>
<rect x="199" y="410" width="31" height="16" fill="#3d3d3d" opacity="0.55"/>
<text x="214.5" y="422" font-size="11.5" fill="#b0b0b0" text-anchor="middle" textLength="10.5" lengthAdjust="spacingAndGlyphs">30</text>
<circle cx="52.5" cy="442.5" r="12.0" fill="#808080"/>
<rect x="37" y="450" width="31" height="16" fill="#3d3d3d" opacity="0.55"/>
<text x="52.5" y="462" font-size="11.5" fill="#b0b0b0" text-anchor="middle" textLength="10.5" lengthAdjust="spacingAndGlyphs">40</text>
<circle cx="85.0" cy="442.5" r="12.0" fill="#808080"/>
<rect x="69" y="450" width="32" height="16" fill="#3d3d3d" opacity="0.55"/>
<text x="85.0" y="462" font-size="11.5" fill="#b0b0b0" text-anchor="middle" textLength="10.5" lengthAdjust="spacingAndGlyphs">50</text>
<circle cx="117.5" cy="442.5" r="12.0" fill="#808080"/>
<rect x="102" y="450" width="31" height="16" fill="#3d3d3d" opacity="0.55"/>
<text x="117.5" y="462" font-size="11.5" fill="#b0b0b0" text-anchor="middle" textLength="10.5" lengthAdjust="spacingAndGlyphs">60</text>
<circle cx="149.5" cy="442.5" r="12.0" fill="#808080"/>
<rect x="134" y="450" width="31" height="16" fill="#3d3d3d" opacity="0.55"/>
<text x="149.5" y="462" font-size="11.5" fill="#b0b0b0" text-anchor="middle" textLength="10.5" lengthAdjust="spacingAndGlyphs">70</text>
<circle cx="182.0" cy="442.5" r="12.0" fill="#808080"/>
<rect x="166" y="450" width="32" height="16" fill="#3d3d3d" opacity="0.55"/>
<text x="182.0" y="462" font-size="11.5" fill="#b0b0b0" text-anchor="middle" textLength="10.5" lengthAdjust="spacingAndGlyphs">80</text>
<circle cx="214.5" cy="442.5" r="12.0" fill="#808080"/>
<rect x="199" y="450" width="31" height="16" fill="#3d3d3d" opacity="0.55"/>
<text x="214.5" y="462" font-size="11.5" fill="#b0b0b0" text-anchor="middle" textLength="15.5" lengthAdjust="spacingAndGlyphs">100</text>
<circle cx="52.5" cy="482.5" r="12.0" fill="#808080"/>
<circle cx="85.0" cy="482.5" r="12.0" fill="#808080"/>
<circle cx="117.5" cy="482.5" r="12.0" fill="#808080"/>
<circle cx="149.5" cy="482.5" r="12.0" fill="#808080"/>
<circle cx="182.0" cy="482.5" r="12.0" fill="#808080"/>
<circle cx="214.5" cy="482.5" r="12.0" fill="#808080"/>
</g>
<path d="M234.0,314.75 L237.5,311.25 L241.0,314.75" fill="none" stroke="#c8c8c8" stroke-width="1.3"/>
<path d="M234.0,479.25 L237.5,482.75 L241.0,479.25" fill="none" stroke="#c8c8c8" stroke-width="1.3"/>
<rect x="41" y="496" width="8" height="1" fill="#989898"/>
<rect x="41" y="500" width="8" height="1" fill="#989898"/>
<rect x="41" y="504" width="8" height="1" fill="#989898"/>
<text x="84" y="506.5" font-size="10.5" fill="#d4d4d4" text-anchor="start" textLength="108" lengthAdjust="spacingAndGlyphs">ツールプロパティ[長方形選択]</text>
<path d="M75.500,497 L65.500,507" stroke="#c0c0c0" stroke-width="3.800" stroke-linecap="round"/><path d="M62.500,510.500 L63.700,506 L67,509.300 Z" fill="#c0c0c0"/><circle cx="73" cy="507" r="2.6" fill="#505050" stroke="#c0c0c0" stroke-width="1.1"/><path d="M73,502.7 L73,511.3 M68.7,507 L77.3,507 M70,504 L76,510 M76,504 L70,510" stroke="#c0c0c0" stroke-width="0.9"/><circle cx="73" cy="507" r="1.6" fill="#505050"/>
<text x="38" y="524.5" font-size="13" fill="#f0f0f0" text-anchor="start" textLength="60" lengthAdjust="spacingAndGlyphs">長方形選択</text>
<rect x="228.5" y="538.5" width="8" height="6.5" rx="1" fill="#e0e0e0"/><path d="M225.5,539 L225.5,536.5 Q225.5,533.8 228,533.8 Q230.5,533.8 230.5,536.5 L230.5,538.5" fill="none" stroke="#e0e0e0" stroke-width="1.2"/>
<text x="53" y="572" font-size="13" fill="#f0f0f0" text-anchor="start" textLength="48" lengthAdjust="spacingAndGlyphs">作成方法</text>
<rect x="130.5" y="561" width="12.5" height="12.5" rx="1" fill="#c2c2c2"/>
<rect x="152" y="560" width="9" height="9" rx="1" fill="#c0c0c0"/><rect x="156.5" y="564.5" width="9.5" height="9.5" rx="1" fill="#525252" stroke="#c0c0c0" stroke-width="1.2"/><path d="M161.2,566.5 L161.2,572 M158.5,569.2 L164,569.2" stroke="#c0c0c0" stroke-width="1.2"/>
<rect x="174" y="560" width="9" height="9" rx="1" fill="#c0c0c0"/><rect x="178.5" y="564.5" width="9.5" height="9.5" rx="1" fill="#525252" stroke="#c0c0c0" stroke-width="1.2"/><path d="M180.5,569.2 L186,569.2" stroke="#c0c0c0" stroke-width="1.2"/>
<rect x="196.5" y="560.5" width="9" height="9" rx="1" fill="none" stroke="#c0c0c0" stroke-width="1.2"/><rect x="200.5" y="564.5" width="9" height="9" rx="1" fill="none" stroke="#c0c0c0" stroke-width="1.2"/><rect x="201" y="565" width="4.5" height="4.5" fill="#c0c0c0"/>
<path d="M216.5,565.0 L220.5,569.0 L224.5,565.0" fill="none" stroke="#d0d0d0" stroke-width="1.3"/>
<path d="M43.5,600 L49.5,600 M46.5,597 L46.5,603" stroke="#d0d0d0" stroke-width="1.1"/>
<text x="71" y="605" font-size="13" fill="#f0f0f0" text-anchor="start" textLength="47" lengthAdjust="spacingAndGlyphs">縦横指定</text>
<path d="M181,593 L181,597 M181,595 Q175.5,595.5 175.5,601 " fill="none" stroke="#6a6a6a" stroke-width="1.1" stroke-dasharray="2 1.5"/><text x="179" y="609" font-size="9" fill="#6a6a6a">%</text>
<path d="M202,593 L202,597 M202,595 Q196.5,595.5 196.5,601 " fill="none" stroke="#6a6a6a" stroke-width="1.1" stroke-dasharray="2 1.5"/><text x="199" y="609" font-size="8" fill="#6a6a6a">Px</text>
<path d="M216.5,598.0 L220.5,602.0 L224.5,598.0" fill="none" stroke="#d0d0d0" stroke-width="1.3"/>
<text x="71" y="637" font-size="13" fill="#f0f0f0" text-anchor="start" textLength="101" lengthAdjust="spacingAndGlyphs">確定後に角度を調整</text>
<text x="52" y="670" font-size="13" fill="#f0f0f0" text-anchor="start" textLength="70" lengthAdjust="spacingAndGlyphs">アンチエイリアス</text>
<path d="M134.5,659 L139.5,659 L139.5,661.5 L142,661.5 L142,667.5 L139.5,667.5 L139.5,670 L134.5,670 L134.5,667.5 L132,667.5 L132,661.5 L134.5,661.5 Z" fill="#c0c0c0"/>
<circle cx="159" cy="665" r="6.3" fill="#c0c0c0"/>
<circle cx="181" cy="665" r="6.8" fill="#8c8c8c"/><circle cx="181" cy="665" r="5" fill="#c0c0c0"/>
<defs><radialGradient id="aa4"><stop offset="0" stop-color="#c8c8c8"/><stop offset="0.45" stop-color="#b4b9cc"/><stop offset="1" stop-color="#7b91cb"/></radialGradient></defs><circle cx="203" cy="665" r="8.5" fill="url(#aa4)"/>
<path d="M216.5,663.0 L220.5,667.0 L224.5,663.0" fill="none" stroke="#d0d0d0" stroke-width="1.3"/>
<circle cx="213.5" cy="701" r="6.2" fill="none" stroke="#bdbdbd" stroke-width="1.1" stroke-dasharray="32 7" transform="rotate(-80 213.5 701)"/><circle cx="213.5" cy="701" r="1.8" fill="#bdbdbd"/><path d="M213.5,701 L213.5,694.5" stroke="#bdbdbd" stroke-width="1.1"/>
<path d="M230.10,693.77 A4.70,4.70 0 0 1 235.32,700.00 L239.80,704.50 A2.00,2.00 0 0 1 237.00,707.30 L232.50,702.82 A4.70,4.70 0 0 1 226.27,697.60 L228.90,700.10 L232.60,696.40 Z" fill="none" stroke="#bdbdbd" stroke-width="1.15" stroke-linejoin="round"/>
<rect x="41" y="720" width="8" height="1" fill="#989898"/>
<rect x="41" y="724" width="8" height="1" fill="#989898"/>
<rect x="41" y="728" width="8" height="1" fill="#989898"/>
<rect x="62" y="719" width="14" height="14" rx="2.5" fill="#a8a8a8"/><rect x="63.5" y="720.5" width="4" height="4" fill="#6c6c6c"/><rect x="71" y="720.5" width="4" height="4" fill="#d8d8d8"/><rect x="63.5" y="728" width="4" height="4" fill="#e0e0e0"/><rect x="71" y="728" width="4" height="4" fill="#585858"/><rect x="67" y="724" width="4.5" height="4.5" fill="#e8e8e8" stroke="#444" stroke-width="1"/>
<text x="84" y="729" font-size="9" fill="#d0d0d0" text-anchor="start" textLength="7" lengthAdjust="spacingAndGlyphs">カ</text>
<defs><clipPath id="cstab"><rect x="94" y="716" width="150" height="13.5"/></clipPath></defs><g clip-path="url(#cstab)">
<rect x="101.5" y="720.5" width="14" height="10" rx="1" fill="none" stroke="#828282" stroke-width="1.3"/><rect x="105" y="723" width="7" height="5" fill="#828282"/>
<circle cx="139" cy="727" r="6.5" fill="none" stroke="#828282" stroke-width="1.3"/><rect x="136" y="724" width="6" height="6" rx="1" fill="#828282"/>
<path d="M161,721.5 L176,721.5 M161,727.5 L176,727.5" stroke="#828282" stroke-width="2.4"/><path d="M164,724.5 L170,724.5" stroke="#828282" stroke-width="1.2"/>
<path d="M192,720 L198,720 L196.5,725 L193.5,725 Z M201,720 L207,720 L205.5,725 L202.5,725 Z" fill="#828282"/><path d="M195,725 L195,730 M204,725 L204,730 M196.5,722.5 L202.5,722.5" stroke="#828282" stroke-width="1.2"/>
<rect x="221.5" y="724.5" width="12" height="7" rx="1" fill="none" stroke="#828282" stroke-width="1.2"/><path d="M224,724 L224,721.5 L236,721.5 L236,729" fill="none" stroke="#828282" stroke-width="1.2"/>
</g>
<text x="114" y="750" font-size="13" fill="#f0f0f0" text-anchor="middle" textLength="76" lengthAdjust="spacingAndGlyphs">標準カラーセット</text>
<path d="M192.0,743.0 L196,747.0 L200.0,743.0" fill="none" stroke="#d0d0d0" stroke-width="1.3"/>
<path d="M211.10,738.27 A4.70,4.70 0 0 1 216.32,744.50 L220.80,749.00 A2.00,2.00 0 0 1 218.00,751.80 L213.50,747.32 A4.70,4.70 0 0 1 207.27,742.10 L209.90,744.60 L213.60,740.90 Z" fill="none" stroke="#bdbdbd" stroke-width="1.15" stroke-linejoin="round"/>
<rect x="228.5" y="739.5" width="11.5" height="12" rx="1.5" fill="none" stroke="#bdbdbd" stroke-width="1.1"/><path d="M234.2,737.5 L234.2,747.5 M231.2,744.8 L234.2,748 L237.2,744.8" fill="none" stroke="#bdbdbd" stroke-width="1.1"/>
<rect x="38" y="757" width="11" height="11" fill="#000000"/>
<rect x="50" y="757" width="11" height="11" fill="#ffffff"/>
<rect x="50.00" y="760.67" width="3.67" height="3.67" fill="#808080"/>
<rect x="53.67" y="757.00" width="3.67" height="3.67" fill="#808080"/>
<rect x="53.67" y="764.33" width="3.67" height="3.67" fill="#808080"/>
<rect x="57.33" y="760.67" width="3.67" height="3.67" fill="#808080"/>
<rect x="62" y="757" width="11" height="11" fill="#ffffff"/>
<rect x="74" y="757" width="11" height="11" fill="#ffffff"/>
<rect x="74.00" y="757.00" width="3.67" height="3.67" fill="#808080"/>
<rect x="74.00" y="764.33" width="3.67" height="3.67" fill="#808080"/>
<rect x="77.67" y="760.67" width="3.67" height="3.67" fill="#808080"/>
<rect x="81.33" y="757.00" width="3.67" height="3.67" fill="#808080"/>
<rect x="81.33" y="764.33" width="3.67" height="3.67" fill="#808080"/>
<rect x="86" y="757" width="11" height="11" fill="#0a0a0a"/>
<rect x="98" y="757" width="11" height="11" fill="#1a1a1a"/>
<rect x="110" y="757" width="11" height="11" fill="#262626"/>
<rect x="122" y="757" width="11" height="11" fill="#333333"/>
<rect x="134" y="757" width="11" height="11" fill="#4d4d4d"/>
<rect x="146" y="757" width="11" height="11" fill="#666666"/>
<rect x="158" y="757" width="11" height="11" fill="#808080"/>
<rect x="170" y="757" width="11" height="11" fill="#999999"/>
<rect x="182" y="757" width="11" height="11" fill="#b3b3b3"/>
<rect x="194" y="757" width="11" height="11" fill="#cccccc"/>
<rect x="206" y="757" width="11" height="11" fill="#d9d9d9"/>
<rect x="218" y="757" width="11" height="11" fill="#e6e6e6"/>
<rect x="38" y="769" width="11" height="11" fill="#f2f2f2"/>
<rect x="50" y="769" width="11" height="11" fill="#ff0000"/>
<rect x="62" y="769" width="11" height="11" fill="#ffff00"/>
<rect x="74" y="769" width="11" height="11" fill="#00ff00"/>
<rect x="86" y="769" width="11" height="11" fill="#00ffff"/>
<rect x="98" y="769" width="11" height="11" fill="#0000ff"/>
<rect x="110" y="769" width="11" height="11" fill="#ff00ff"/>
<rect x="122" y="769" width="11" height="11" fill="#2b2d33"/>
<rect x="134" y="769" width="11" height="11" fill="#454954"/>
<rect x="146" y="769" width="11" height="11" fill="#7d8aa8"/>
<rect x="158" y="769" width="11" height="11" fill="#a8b0cc"/>
<rect x="170" y="769" width="11" height="11" fill="#d0d4e8"/>
<rect x="182" y="769" width="11" height="11" fill="#36302a"/>
<rect x="194" y="769" width="11" height="11" fill="#54473c"/>
<rect x="206" y="769" width="11" height="11" fill="#6b5546"/>
<rect x="218" y="769" width="11" height="11" fill="#b5917d"/>
<rect x="38" y="781" width="11" height="11" fill="#c8a596"/>
<rect x="50" y="781" width="11" height="11" fill="#ff9999"/>
<rect x="62" y="781" width="11" height="11" fill="#ffbf99"/>
<rect x="74" y="781" width="11" height="11" fill="#ffdf99"/>
<rect x="86" y="781" width="11" height="11" fill="#ffff99"/>
<rect x="98" y="781" width="11" height="11" fill="#ccff99"/>
<rect x="110" y="781" width="11" height="11" fill="#99ffa6"/>
<rect x="122" y="781" width="11" height="11" fill="#99ffe6"/>
<rect x="134" y="781" width="11" height="11" fill="#99dfff"/>
<rect x="146" y="781" width="11" height="11" fill="#99bfff"/>
<rect x="158" y="781" width="11" height="11" fill="#9999ff"/>
<rect x="170" y="781" width="11" height="11" fill="#bf99ff"/>
<rect x="182" y="781" width="11" height="11" fill="#df99ff"/>
<rect x="194" y="781" width="11" height="11" fill="#ff99ee"/>
<rect x="206" y="781" width="11" height="11" fill="#ff99c0"/>
<rect x="218" y="781" width="11" height="11" fill="#fae6dc"/>
<rect x="38" y="793" width="11" height="11" fill="#ffe6da"/>
<rect x="50" y="793" width="11" height="11" fill="#e84c4c"/>
<rect x="62" y="793" width="11" height="11" fill="#e8844c"/>
<rect x="74" y="793" width="11" height="11" fill="#e8b44c"/>
<rect x="86" y="793" width="11" height="11" fill="#e8e84c"/>
<rect x="98" y="793" width="11" height="11" fill="#98e84c"/>
<rect x="110" y="793" width="11" height="11" fill="#4ce868"/>
<rect x="122" y="793" width="11" height="11" fill="#4ce8c4"/>
<rect x="134" y="793" width="11" height="11" fill="#4cb4e8"/>
<rect x="146" y="793" width="11" height="11" fill="#4c84e8"/>
<rect x="158" y="793" width="11" height="11" fill="#6464f0"/>
<rect x="170" y="793" width="11" height="11" fill="#844ce8"/>
<rect x="182" y="793" width="11" height="11" fill="#b44ce8"/>
<rect x="194" y="793" width="11" height="11" fill="#e84cc8"/>
<rect x="206" y="793" width="11" height="11" fill="#e84c88"/>
<rect x="218" y="793" width="11" height="11" fill="#f5e0d5"/>
<rect x="38" y="805" width="11" height="11" fill="#ffe0d0"/>
<rect x="50" y="805" width="11" height="11" fill="#ee1c24"/>
<rect x="62" y="805" width="11" height="11" fill="#ff5a00"/>
<rect x="74" y="805" width="11" height="11" fill="#ffa800"/>
<rect x="86" y="805" width="11" height="11" fill="#fff000"/>
<rect x="98" y="805" width="11" height="11" fill="#7fff00"/>
<rect x="110" y="805" width="11" height="11" fill="#1fe040"/>
<rect x="122" y="805" width="11" height="11" fill="#00ffc0"/>
<rect x="134" y="805" width="11" height="11" fill="#00a8ff"/>
<rect x="146" y="805" width="11" height="11" fill="#0054ff"/>
<rect x="158" y="805" width="11" height="11" fill="#0000ff"/>
<rect x="170" y="805" width="11" height="11" fill="#5400ff"/>
<rect x="182" y="805" width="11" height="11" fill="#a800ff"/>
<rect x="194" y="805" width="11" height="11" fill="#ee0090"/>
<rect x="206" y="805" width="11" height="11" fill="#ff0054"/>
<rect x="218" y="805" width="11" height="11" fill="#e8cbbf"/>
<rect x="38" y="817" width="11" height="11" fill="#f0c8b4"/>
<rect x="50" y="817" width="11" height="11" fill="#993333"/>
<rect x="62" y="817" width="11" height="11" fill="#995933"/>
<rect x="74" y="817" width="11" height="11" fill="#997a33"/>
<rect x="86" y="817" width="11" height="11" fill="#999933"/>
<rect x="98" y="817" width="11" height="11" fill="#669933"/>
<rect x="110" y="817" width="11" height="11" fill="#339944"/>
<rect x="122" y="817" width="11" height="11" fill="#339980"/>
<rect x="134" y="817" width="11" height="11" fill="#337a99"/>
<rect x="146" y="817" width="11" height="11" fill="#335599"/>
<rect x="158" y="817" width="11" height="11" fill="#333399"/>
<rect x="170" y="817" width="11" height="11" fill="#553399"/>
<rect x="182" y="817" width="11" height="11" fill="#7a3399"/>
<rect x="194" y="817" width="11" height="11" fill="#993388"/>
<rect x="206" y="817" width="11" height="11" fill="#993355"/>
<rect x="218" y="817" width="11" height="11" fill="#ffe0cc"/>
<rect x="38" y="829" width="11" height="11" fill="#e6b096"/>
<rect x="50" y="829" width="11" height="11" fill="#5c0f0f"/>
<rect x="62" y="829" width="11" height="11" fill="#5c2a0f"/>
<rect x="74" y="829" width="11" height="11" fill="#5c440f"/>
<rect x="86" y="829" width="11" height="11" fill="#5c5c0f"/>
<rect x="98" y="829" width="11" height="11" fill="#3a5c0f"/>
<rect x="110" y="829" width="11" height="11" fill="#0f5c1e"/>
<rect x="122" y="829" width="11" height="11" fill="#0f5c4d"/>
<rect x="134" y="829" width="11" height="11" fill="#0f445c"/>
<rect x="146" y="829" width="11" height="11" fill="#0f2a5c"/>
<rect x="158" y="829" width="11" height="11" fill="#0f0f5c"/>
<rect x="170" y="829" width="11" height="11" fill="#2a0f5c"/>
<rect x="182" y="829" width="11" height="11" fill="#440f5c"/>
<rect x="194" y="829" width="11" height="11" fill="#5c0f50"/>
<rect x="206" y="829" width="11" height="11" fill="#5c0f2a"/>
<rect x="218" y="829" width="11" height="11" fill="#ffd0b0"/>
<rect x="38" y="841" width="11" height="11" fill="#d49878"/>
<rect x="50" y="841" width="11" height="11" fill="#3a0808"/>
<rect x="62" y="841" width="11" height="11" fill="#26130a"/>
<rect x="74" y="841" width="11" height="11" fill="#2e2408"/>
<rect x="86" y="841" width="11" height="11" fill="#2e2e08"/>
<rect x="98" y="841" width="11" height="11" fill="#1c2e08"/>
<rect x="110" y="841" width="11" height="11" fill="#082e0f"/>
<rect x="122" y="841" width="11" height="11" fill="#082e26"/>
<rect x="134" y="841" width="11" height="11" fill="#08222e"/>
<rect x="146" y="841" width="11" height="11" fill="#08152e"/>
<rect x="158" y="841" width="11" height="11" fill="#08082e"/>
<rect x="170" y="841" width="11" height="11" fill="#15082e"/>
<rect x="182" y="841" width="11" height="11" fill="#22082e"/>
<rect x="194" y="841" width="11" height="11" fill="#2e0826"/>
<rect x="206" y="841" width="11" height="11" fill="#2e0815"/>
<rect x="218" y="841" width="11" height="11" fill="#f5c0a0"/>
<rect x="37.6" y="756.6" width="11.8" height="11.8" fill="none" stroke="#ff0000" stroke-width="1.2"/><rect x="38.8" y="757.8" width="9.4" height="9.4" fill="none" stroke="#eef6f6" stroke-width="1.2"/><rect x="39.8" y="758.8" width="7.4" height="7.4" fill="none" stroke="#505050" stroke-width="0.8"/>
<path d="M234.0,764.75 L237.5,761.25 L241.0,764.75" fill="none" stroke="#c8c8c8" stroke-width="1.3"/>
<path d="M234.0,845.25 L237.5,848.75 L241.0,845.25" fill="none" stroke="#c8c8c8" stroke-width="1.3"/>
<path d="M190,858.5 L196,858.5 L199.5,862 L199.5,870.5 L188.5,870.5 L188.5,862" fill="none" stroke="#bdbdbd" stroke-width="1.1"/><path d="M194,861 L194,867.5 M191.5,865 L194,867.8 L196.5,865" fill="none" stroke="#bdbdbd" stroke-width="1.1"/>
<path d="M214,856.5 Q208.5,863 208.5,866 Q208.5,870.5 214,870.5 Q219.5,870.5 219.5,866 Q219.5,863 214,856.5 Z" fill="none" stroke="#bdbdbd" stroke-width="1.1"/><circle cx="219.5" cy="869" r="3.3" fill="#505050" stroke="#bdbdbd" stroke-width="1"/><path d="M219.5,867 L219.5,871 M217.5,869 L221.5,869" stroke="#bdbdbd" stroke-width="1"/>
<path d="M229.5,860.5 L230.3,870.5 L237.7,870.5 L238.5,860.5 Z" fill="none" stroke="#bdbdbd" stroke-width="1.1"/><path d="M228,859.5 L240,859.5 M232,859.5 L232,857.8 L236,857.8 L236,859.5 M232.3,862.5 L232.3,868.5 M234,862.5 L234,868.5 M235.7,862.5 L235.7,868.5" fill="none" stroke="#bdbdbd" stroke-width="1"/>
<rect x="249.5" y="28.5" width="17" height="17" rx="2" fill="none" stroke="#c4c4c4" stroke-width="1.2"/><g transform="rotate(-22 258 37)"><path d="M259.500,35.200 Q255.500,34.200 254.800,37 Q254.500,39.800 258,39.800 Q263.200,39.500 263,36.200 Q262.500,32.800 258,32.800 Q252.200,33.200 252.200,37.200 Q252.500,41.500 258,41.500 Q261.500,41.300 263,39.500" fill="none" stroke="#c4c4c4" stroke-width="1.300" stroke-linecap="round"/></g>
<path d="M285.5,28.5 L296.5,28.5 L296.5,40 M292,44.5 L288,44.5 L285.5,42 L285.5,28.5 M285.5,41.5 L288.5,41.5 L288.5,44.5" fill="none" stroke="#c4c4c4" stroke-width="1.3"/><circle cx="296.5" cy="43" r="4.600" fill="#c4c4c4" stroke="#505050" stroke-width="1"/><path d="M296.5,40.200 L296.5,45.800 M293.700,43 L299.300,43" stroke="#484848" stroke-width="1.200"/>
<path d="M306.5,44 L306.5,30.5 L312,30.5 L313.5,32.5 L319,32.5 L319,36" fill="none" stroke="#c4c4c4" stroke-width="1.3"/><path d="M306.5,44.5 L309.5,36.5 L324.5,36.5 L321,44.5 Z" fill="#c4c4c4"/><path d="M316,33 Q318,29.5 322,30.5 M320,28.5 L323,30.8 L320,33" fill="none" stroke="#c4c4c4" stroke-width="1.2"/>
<path d="M329.5,40 L334,30.5 L344,30.5 L348.5,40 L348.5,44.5 L329.5,44.5 Z" fill="none" stroke="#c4c4c4" stroke-width="1.2"/><rect x="331" y="40.5" width="16" height="2.5" fill="#c4c4c4"/><path d="M339,26.5 L339,36.5 M335.5,33.5 L339,37 L342.5,33.5" fill="none" stroke="#c4c4c4" stroke-width="1.2"/>
<path d="M353.0,35.0 L357,39.0 L361.0,35.0" fill="none" stroke="#c4c4c4" stroke-width="1.3"/>
<path d="M377,43.5 L386,43.5 Q391.5,43.5 391.5,38.5 Q391.5,33.5 386,33.5 L379,33.5" fill="none" stroke="#c4c4c4" stroke-width="1.4"/><path d="M381.5,29.5 L376.5,33.5 L381.5,37.5 Z" fill="#c4c4c4"/>
<path d="M415,43.5 L406,43.5 Q400.5,43.5 400.5,38.5 Q400.5,33.5 406,33.5 L413,33.5" fill="none" stroke="#6e6e6e" stroke-width="1.4"/><path d="M410.5,29.5 L415.5,33.5 L410.5,37.5 Z" fill="#6e6e6e"/>
<path d="M444.8,37.0 L448.8,37.0" stroke="#c4c4c4" stroke-width="1.5"/>
<path d="M444.2,39.2 L447.7,41.2" stroke="#c4c4c4" stroke-width="1.5"/>
<path d="M442.6,40.9 L444.6,44.4" stroke="#c4c4c4" stroke-width="1.5"/>
<path d="M440.3,41.5 L440.3,45.5" stroke="#c4c4c4" stroke-width="1.5"/>
<path d="M438.1,40.9 L436.1,44.4" stroke="#c4c4c4" stroke-width="1.5"/>
<path d="M436.4,39.2 L432.9,41.2" stroke="#c4c4c4" stroke-width="1.5"/>
<path d="M435.8,37.0 L431.8,37.0" stroke="#c4c4c4" stroke-width="1.5"/>
<path d="M436.4,34.8 L432.9,32.8" stroke="#c4c4c4" stroke-width="1.5"/>
<path d="M438.1,33.1 L436.1,29.6" stroke="#c4c4c4" stroke-width="1.5"/>
<path d="M440.3,32.5 L440.3,28.5" stroke="#c4c4c4" stroke-width="1.5"/>
<path d="M442.6,33.1 L444.6,29.6" stroke="#c4c4c4" stroke-width="1.5"/>
<path d="M444.2,34.8 L447.7,32.8" stroke="#c4c4c4" stroke-width="1.5"/>
<rect x="457.5" y="30.5" width="10.5" height="10.5" fill="none" stroke="#6e6e6e" stroke-width="1" stroke-dasharray="1.5 1.2"/>
<path d="M470.5,41.0 L473.5,41.0" stroke="#6e6e6e" stroke-width="1.2"/>
<path d="M470.3,42.0 L473.1,43.1" stroke="#6e6e6e" stroke-width="1.2"/>
<path d="M469.8,42.8 L471.9,44.9" stroke="#6e6e6e" stroke-width="1.2"/>
<path d="M469.0,43.3 L470.1,46.1" stroke="#6e6e6e" stroke-width="1.2"/>
<path d="M468.0,43.5 L468.0,46.5" stroke="#6e6e6e" stroke-width="1.2"/>
<path d="M488.500,28.500 L497.500,37 L488.500,45.500 L479.500,37 Z" fill="none" stroke="#c4c4c4" stroke-width="1.300" stroke-linejoin="round"/><path d="M481,37.500 L496,37.500 L488.500,44.500 Z" fill="#c4c4c4"/><path d="M480.500,37 Q478.500,39.500 479,42 Q480,43.500 481.500,42 L482.500,39 Z" fill="#c4c4c4"/>
<rect x="505.500" y="31.500" width="13" height="12.500" fill="none" stroke="#c4c4c4" stroke-width="1.200"/>
<rect x="510.5" y="30.0" width="3" height="3" fill="#c4c4c4"/>
<rect x="510.5" y="42.5" width="3" height="3" fill="#c4c4c4"/>
<rect x="504.0" y="36.2" width="3" height="3" fill="#c4c4c4"/>
<rect x="517.0" y="36.2" width="3" height="3" fill="#c4c4c4"/>
<path d="M512,31 L512,27.500" stroke="#c4c4c4" stroke-width="1.100"/><circle cx="512" cy="27.300" r="1.300" fill="#c4c4c4"/>
<rect x="536.5" y="30.5" width="14" height="14" fill="none" stroke="#6e6e6e" stroke-width="1" stroke-dasharray="1.5 1.2"/><path d="M537,31 L550,44" stroke="#6e6e6e" stroke-width="1"/>
<rect x="560.5" y="30.5" width="14" height="14" fill="none" stroke="#6e6e6e" stroke-width="1" stroke-dasharray="1.5 1.2"/><path d="M574.5,31.5 L574.5,44.5 L561.5,44.5 Z" fill="#6e6e6e"/>
<rect x="584.5" y="29.5" width="15" height="15" rx="2" fill="none" stroke="#6e6e6e" stroke-width="1"/><rect x="587.5" y="32.5" width="9" height="9" fill="none" stroke="#6e6e6e" stroke-width="1" stroke-dasharray="1.5 1.2"/>
<path d="M615.500,30.500 L615.500,44.500 L630,44.500 Z" fill="none" stroke="#c8c8c8" stroke-width="1.100"/><path d="M622,39.500 L630.500,29.800 L632.500,31.500 L624,41.200 L621.500,42 Z" fill="#c8c8c8"/>
<path d="M639.500,37.500 Q640,45 648.500,45 Q656.500,45 657,37.500 Z" fill="none" stroke="#c8c8c8" stroke-width="1.100"/><path d="M646.500,38.500 L655,29.500 L657,31.200 L648.500,40.500 L646,41.200 Z" fill="#c8c8c8"/>
<path d="M663,37.500 L682,37.500 M666.500,33 L666.500,46.500 M676.500,40 L676.500,46.500" stroke="#8c8c8c" stroke-width="0.900"/><path d="M666.500,43.500 L681,43.500" stroke="#c4c4c4" stroke-width="1.300"/><path d="M666.500,37.500 L666.500,43.500" stroke="#c4c4c4" stroke-width="1.300"/><path d="M672.500,37 L680,28.500 L682,30.200 L674.500,38.800 L672,39.500 Z" fill="#c4c4c4"/>
<path d="M698,45.5 L699.5,41.5 Q696,39 696.5,35.5 Q697.5,30 704,30 Q711,30.5 711.5,36 Q711.5,42.5 704,43 Q702,43 701,42.5 Z" fill="none" stroke="#c4c4c4" stroke-width="1.2"/><text x="700.200" y="41.500" font-size="12" font-weight="bold" fill="#c4c4c4">?</text><path d="M708,28.5 L712.5,28.5 L712.5,33 M712.5,28.5 L708.5,32.5" fill="none" stroke="#c4c4c4" stroke-width="1"/>
<path d="M1189.5,30.0 L1185.5,34 L1189.5,38.0" fill="none" stroke="#8c8c8c" stroke-width="1.2"/>
<path d="M1194.5,30.0 L1190.5,34 L1194.5,38.0" fill="none" stroke="#8c8c8c" stroke-width="1.2"/>
<text x="250" y="65" font-size="11.5" fill="#e0e0e0" text-anchor="start" textLength="58" lengthAdjust="spacingAndGlyphs">balloon3_clh</text>
<text x="308.5" y="65" font-size="11.5" fill="#e0e0e0" text-anchor="start" textLength="14" lengthAdjust="spacingAndGlyphs">用*</text>
<circle cx="334.5" cy="61" r="3" fill="#a4a4a4"/>
<path d="M1171.9,58.3 L1175,61.7 L1178.1,58.3" fill="none" stroke="#c8c8c8" stroke-width="1.3"/>
<path d="M1171.9,81.0 L1175,77.6 L1178.1,81.0" fill="none" stroke="#d0d0d0" stroke-width="1.3"/>
<path d="M1171.9,813.3 L1175,816.7 L1178.1,813.3" fill="none" stroke="#d0d0d0" stroke-width="1.3"/>
<path d="M248,822 L344,822 L300,826.5 L262,832 L248,832 Z" fill="#4c4c4c"/>
<text x="250" y="831.5" font-size="11.5" fill="#f0f0f0" text-anchor="start" textLength="25" lengthAdjust="spacingAndGlyphs">100.0</text>
<path d="M352.5,827.5 L360,827.5 M373,827.5 L381,827.5 M377,823.5 L377,831.5" stroke="#8c8c8c" stroke-width="1.3"/><rect x="393" y="824" width="6" height="6" fill="#b4b4b4"/>
<path d="M409,822 L430,822 L409,826 Z" fill="#4c4c4c"/>
<path d="M458,832 L470,822 L492,822 L504,832 Z" fill="#4a4a4a"/>
<text x="414" y="831.5" font-size="11.5" fill="#f0f0f0" text-anchor="start" textLength="13" lengthAdjust="spacingAndGlyphs">0.0</text>
<path d="M512.5,829.5 Q513,824.5 517.5,824.5 Q521.5,824.8 521.5,830" fill="none" stroke="#a8a8a8" stroke-width="1.2"/><path d="M510,827 L512.8,831 L515.5,827.5 Z" fill="#a8a8a8"/>
<path d="M540.5,829.5 Q540,824.5 535.5,824.5 Q531.5,824.8 531.5,830" fill="none" stroke="#a8a8a8" stroke-width="1.2"/><path d="M543,827 L540.2,831 L537.5,827.5 Z" fill="#a8a8a8"/>
<circle cx="556" cy="827.5" r="4.6" fill="none" stroke="#a8a8a8" stroke-width="1.1" stroke-dasharray="24 5" transform="rotate(-75 556 827.5)"/><circle cx="556" cy="827.5" r="1.4" fill="#a8a8a8"/><path d="M556,827.5 L556,822.5" stroke="#a8a8a8" stroke-width="1"/>
<path d="M573.25,824.0 L569.75,827.5 L573.25,831.0" fill="none" stroke="#d0d0d0" stroke-width="1.3"/>
<path d="M1161.75,824.0 L1165.25,827.5 L1161.75,831.0" fill="none" stroke="#d0d0d0" stroke-width="1.3"/>
<path d="M251.5,845.25 L256,840.75 L260.5,845.25" fill="none" stroke="#8c8c8c" stroke-width="1.2"/>
<path d="M251.5,858.25 L256,862.75 L260.5,858.25" fill="none" stroke="#8c8c8c" stroke-width="1.2"/>
<path d="M251.5,863.25 L256,867.75 L260.5,863.25" fill="none" stroke="#8c8c8c" stroke-width="1.2"/>
<rect x="280.5" y="846.5" width="14.5" height="14.5" rx="1.5" fill="none" stroke="#c0c0c0" stroke-width="1.2"/><path d="M284.5,847 L284.5,861" stroke="#c0c0c0" stroke-width="1.2"/><circle cx="289.5" cy="851" r="1.2" fill="#c0c0c0"/><circle cx="289.5" cy="856.5" r="1.2" fill="#c0c0c0"/>
<rect x="1200" y="28" width="1" height="12" fill="#6a6a6a"/>
<rect x="1202" y="28" width="1" height="12" fill="#6a6a6a"/>
<rect x="1204" y="28" width="1" height="12" fill="#6a6a6a"/>
<path d="M1402.0,30.0 L1406.0,34 L1402.0,38.0" fill="none" stroke="#8c8c8c" stroke-width="1.2"/>
<path d="M1423.5,30.0 L1427.5,34 L1423.5,38.0" fill="none" stroke="#8c8c8c" stroke-width="1.2"/>
<path d="M1428.5,30.0 L1432.5,34 L1428.5,38.0" fill="none" stroke="#8c8c8c" stroke-width="1.2"/>
<rect x="1203" y="50" width="8" height="1" fill="#989898"/>
<rect x="1203" y="54" width="8" height="1" fill="#989898"/>
<rect x="1203" y="58" width="8" height="1" fill="#989898"/>
<circle cx="1229.500" cy="57.500" r="5.400" fill="none" stroke="#c8c8c8" stroke-width="1.600"/><path d="M1227.500,55.500 L1236,63.500 M1227.300,59.500 L1227.300,55.300 L1231.500,55.300" fill="none" stroke="#c8c8c8" stroke-width="1.400"/>
<text x="1244" y="60" font-size="10" fill="#d0d0d0" text-anchor="start" textLength="57" lengthAdjust="spacingAndGlyphs">クイックアクセス</text>
<defs><clipPath id="qatab"><rect x="1306" y="48" width="125" height="13.5"/></clipPath></defs><g clip-path="url(#qatab)">
<rect x="1314.5" y="53.5" width="12" height="9" rx="1" fill="none" stroke="#828282" stroke-width="1.2"/><rect x="1317" y="56" width="7" height="6" fill="#828282"/>
<rect x="1344.5" y="52.5" width="12" height="10" rx="1" fill="none" stroke="#828282" stroke-width="1.2"/><path d="M1346,62 L1350,57 L1355,62 Z" fill="#828282"/>
<path d="M1374,62 Q1374,53.5 1381,53.5 Q1388,53.5 1388,62" fill="none" stroke="#828282" stroke-width="1.2"/><path d="M1375,58.5 L1387,58.5" stroke="#828282" stroke-width="1.1"/>
<path d="M1403.5,62 Q1403.5,52.5 1410.5,52.5 Q1417.500,52.5 1417.5,62" fill="none" stroke="#828282" stroke-width="1.2"/><path d="M1410.5,57.5 L1410.5,62" stroke="#828282" stroke-width="1.4"/><circle cx="1410.5" cy="55.5" r="0.9" fill="#828282"/>
</g>
<text x="1201" y="85" font-size="12.5" fill="#f0f0f0" text-anchor="start" textLength="30" lengthAdjust="spacingAndGlyphs">セット1</text>
<text x="1318" y="85" font-size="12.5" fill="#f0f0f0" text-anchor="start" textLength="31" lengthAdjust="spacingAndGlyphs">セット2</text>
<path d="M1424.5,105.0 L1427.5,102.0 L1430.5,105.0" fill="none" stroke="#c8c8c8" stroke-width="1.3"/>
<path d="M1424.5,179.5 L1427.5,182.5 L1430.5,179.5" fill="none" stroke="#c8c8c8" stroke-width="1.3"/>
<path d="M1206,119 L1215.500,109.500" stroke="#c4c4c4" stroke-width="4.200" stroke-linecap="round"/><path d="M1201.500,123.800 L1203.500,118.200 L1207,121.800 Z" fill="#c4c4c4"/><path d="M1200.500,124.800 L1214,124.800" stroke="#c4c4c4" stroke-width="1"/><path d="M1218.500,121 L1218.500,125.500 L1214,125.500 Z" fill="#c4c4c4"/>
<text x="1222" y="120" font-size="12.5" fill="#f0f0f0" text-anchor="start" textLength="112" lengthAdjust="spacingAndGlyphs">線の色を描画色に変更</text>
<circle cx="1208" cy="154.500" r="6.3" fill="none" stroke="#c4c4c4" stroke-width="1.2"/><rect x="1204.5" y="151" width="7" height="7" rx="1" fill="#c4c4c4"/><path d="M1212.5,159.5 L1217.5,164.5" stroke="#c4c4c4" stroke-width="1.6"/>
<text x="1224" y="160" font-size="11.5" fill="#f0f0f0" text-anchor="start" textLength="23.5" lengthAdjust="spacingAndGlyphs">100%</text>
<rect x="1208" y="185.5" width="1.5" height="1.5" fill="#c8c8c8"/>
<rect x="1203" y="197" width="8" height="1" fill="#989898"/>
<rect x="1203" y="201" width="8" height="1" fill="#989898"/>
<rect x="1203" y="205" width="8" height="1" fill="#989898"/>
<g transform="translate(4.500,1.500)"><path d="M1225,196.500 L1231.5,199.500 L1225,202.500 L1218.5,199.500 Z" fill="none" stroke="#c8c8c8" stroke-width="1.200"/><path d="M1218.500,203 L1225,206 L1227.500,204.800 M1218.5,206.500 L1225,209.500 L1226.500,208.800" fill="none" stroke="#c8c8c8" stroke-width="1.200"/><path d="M1226.500,202.500 L1235,202.500 L1232,206 L1232,210.500 L1229.500,209 L1229.500,206 Z" fill="#c8c8c8"/></g>
<text x="1244.5" y="208" font-size="10" fill="#d4d4d4" text-anchor="start" textLength="46" lengthAdjust="spacingAndGlyphs">レイヤー検索</text>
<circle cx="1311.500" cy="203.500" r="5.200" fill="none" stroke="#828282" stroke-width="1.200"/><path d="M1306.500,205 Q1307.500,199.500 1313,198.500 L1308,207.800 Z" fill="#828282"/>
<text x="1325" y="208" font-size="9.5" fill="#767676" text-anchor="start" textLength="62" lengthAdjust="spacingAndGlyphs">アニメーションセル</text>
<circle cx="1225.500" cy="221" r="5.600" fill="none" stroke="#d0d0d0" stroke-width="1.300"/><path d="M1229.500,225.200 L1234,229.800" stroke="#d0d0d0" stroke-width="1.700"/>
<text x="1238" y="228" font-size="12.5" fill="#f0f0f0" text-anchor="start" textLength="87" lengthAdjust="spacingAndGlyphs">表示対象レイヤー</text>
<path d="M1345.5,221.0 L1349.5,225.0 L1353.5,221.0" fill="none" stroke="#d0d0d0" stroke-width="1.3"/>
<circle cx="1372" cy="220.800" r="5.400" fill="none" stroke="#747474" stroke-width="1.200"/><circle cx="1377" cy="227.800" r="3" fill="#585858" stroke="#747474" stroke-width="1.200"/>
<path d="M1384.5,220.5 L1388.5,224.5 L1392.5,220.5" fill="none" stroke="#747474" stroke-width="1.4"/>
<circle cx="1410.500" cy="220.800" r="5.400" fill="none" stroke="#747474" stroke-width="1.200"/><path d="M1413.500,225.5 L1419.500,231.500 M1419.500,225.5 L1413.500,231.500" stroke="#747474" stroke-width="1.300"/>
<path d="M1424.5,220.5 L1428.5,224.5 L1432.5,220.5" fill="none" stroke="#747474" stroke-width="1.4"/>
<path d="M1421.5,242.5 L1422.3,252.5 L1429.7,252.5 L1430.5,242.5 Z" fill="none" stroke="#686868" stroke-width="1.1"/><path d="M1420,241.5 L1432,241.5 M1424,241.5 L1424,239.8 L1428,239.8 L1428,241.5 M1424.3,244.5 L1424.3,250.5 M1426,244.5 L1426,250.5 M1427.7,244.5 L1427.7,250.5" fill="none" stroke="#686868" stroke-width="1"/>
<rect x="1203" y="321" width="8" height="1" fill="#989898"/>
<rect x="1203" y="325" width="8" height="1" fill="#989898"/>
<rect x="1203" y="329" width="8" height="1" fill="#989898"/>
<path d="M1230.5,320.5 L1237.0,323.5 L1230.5,326.5 L1224.0,323.5 Z" fill="none" stroke="#c8c8c8" stroke-width="1.1"/><path d="M1224.0,326.5 L1230.5,329.5 L1237.0,326.5 M1224.0,329.5 L1230.5,332.5 L1237.0,329.5" fill="none" stroke="#c8c8c8" stroke-width="1.1"/>
<text x="1244" y="331.5" font-size="10.5" fill="#d4d4d4" text-anchor="start" textLength="27" lengthAdjust="spacingAndGlyphs">レイヤー</text>
<defs><clipPath id="lytab"><rect x="1276" y="318" width="60" height="14"/></clipPath></defs><g clip-path="url(#lytab)">
<path d="M1290,322.5 L1296.5,325.5 L1290,328.5 L1283.500,325.5 Z" fill="none" stroke="#828282" stroke-width="1.1"/><path d="M1283.500,329 L1283.500,333 M1287,331 L1287,333.5 M1291,331.5 L1291,333.500 M1295,330 L1295,333.5" stroke="#828282" stroke-width="1" stroke-dasharray="1.2 1"/>
<rect x="1314.5" y="325.5" width="12" height="8" fill="none" stroke="#828282" stroke-width="1.1"/><path d="M1314,324.500 L1326.5,322 " stroke="#828282" stroke-width="1.8" stroke-dasharray="2 1.2"/><path d="M1319,328 L1322.5,330 L1319,332 Z" fill="#828282"/>
</g>
<path d="M1225.5,345.75 L1229,349.25 L1232.5,345.75" fill="none" stroke="#d0d0d0" stroke-width="1.3"/>
<text x="1271.5" y="352" font-size="12.5" fill="#f0f0f0" text-anchor="middle" textLength="24" lengthAdjust="spacingAndGlyphs">通常</text>
<path d="M1304.0,345.75 L1307.5,349.25 L1311.0,345.75" fill="none" stroke="#d0d0d0" stroke-width="1.3"/>
<defs><linearGradient id="opg" x1="0" x2="1"><stop offset="0" stop-color="#9a9a9a"/><stop offset="1" stop-color="#fafafa"/></linearGradient><pattern id="chk" width="10" height="10" patternUnits="userSpaceOnUse" x="1322" y="342"><rect width="10" height="10" fill="#ffffff"/><rect width="5" height="5" fill="#c8c8c8"/><rect x="5" y="5" width="5" height="5" fill="#c8c8c8"/></pattern><linearGradient id="opm" x1="0" x2="1"><stop offset="0" stop-color="#fff" stop-opacity="0"/><stop offset="1" stop-color="#fff" stop-opacity="0.35"/></linearGradient></defs>
<rect x="1322" y="342" width="74" height="9" fill="url(#chk)"/><rect x="1322" y="342" width="74" height="9" fill="url(#opm)"/><rect x="1322" y="342" width="74" height="9" fill="#808080" opacity="0.18"/>
<text x="1404" y="352" font-size="11.5" fill="#f0f0f0" text-anchor="start" textLength="16" lengthAdjust="spacingAndGlyphs">100</text>
<path d="M1424.5,345.75 L1428,342.25 L1431.5,345.75" fill="none" stroke="#d0d0d0" stroke-width="1.3"/>
<path d="M1424.5,350.25 L1428,353.75 L1431.5,350.25" fill="none" stroke="#d0d0d0" stroke-width="1.3"/>
<rect x="1232.5" y="359.5" width="10" height="10" fill="none" stroke="#c4c4c4" stroke-width="1" stroke-dasharray="2 1.4"/><rect x="1229" y="364" width="9.5" height="9.500" rx="1.500" fill="#8a8a8a" stroke="#c4c4c4" stroke-width="1"/>
<path d="M1253.500,361 L1256.500,361 L1257.5,366 L1252.5,366 Z M1252,367 L1258,367 L1259,375.5 L1251,375.500 Z" fill="#c4c4c4"/><path d="M1248,362 L1251.5,363.5 M1262,362 L1258.5,363.5 M1248,366.5 L1251.500,365.500 M1262,366.500 L1258.5,365.500" stroke="#c4c4c4" stroke-width="1"/>
<path d="M1269.5,360.5 L1276.500,360.5 L1276.5,370 L1273,372.500 L1269.5,370 Z" fill="none" stroke="#c4c4c4" stroke-width="1.1"/><path d="M1271.5,364 Q1273,362.5 1273,365 Q1273,362.5 1274.5,364 Q1274.500,366 1273,367.5 Q1271.500,366 1271.500,364 Z" fill="#c4c4c4"/><path d="M1276,372 Q1279,376.500 1282.5,373.5 M1281,371.500 L1283,373.5 L1280.5,375.500" fill="none" stroke="#c4c4c4" stroke-width="1.1"/>
<rect x="1290" y="366.500" width="10.500" height="8" rx="1.200" fill="#c4c4c4"/><path d="M1292.300,366.500 L1292.300,364 Q1292.300,361.300 1295.250,361.300 Q1298.200,361.300 1298.200,364 L1298.200,366.500" fill="none" stroke="#c4c4c4" stroke-width="1.400"/>
<rect x="1308" y="368.5" width="8" height="7" rx="1" fill="#c4c4c4"/><path d="M1309.8,368.5 L1309.800,366.5 Q1309.800,364.5 1312,364.5 Q1314.200,364.5 1314.200,366.500 L1314.2,368.5" fill="none" stroke="#c4c4c4" stroke-width="1.2"/><rect x="1314" y="360" width="3.5" height="3.5" fill="#c4c4c4"/><rect x="1317.500" y="363.500" width="3.5" height="3.5" fill="#c4c4c4"/><rect x="1321" y="360" width="3" height="3.5" fill="#c4c4c4"/><rect x="1317.5" y="367" width="3.500" height="3.500" fill="#8a8a8a"/><rect x="1321" y="367" width="3" height="3.5" fill="#c4c4c4"/>
<path d="M1332,362.5 L1341,362.5 Q1342.500,362.5 1342.5,364 L1342.500,368 M1337,373.500 L1333.500,373.500 Q1332,373.500 1332,372 Z" fill="#747474" stroke="#747474" stroke-width="1"/><circle cx="1337.500" cy="368" r="3" fill="#585858"/><path d="M1339.500,370.500 L1345.500,376.5 M1345.500,370.500 L1339.500,376.5" stroke="#747474" stroke-width="1.3"/>
<path d="M1350.0,366.75 L1353.5,370.25 L1357.0,366.75" fill="none" stroke="#8a8a8a" stroke-width="1.3"/>
<path d="M1368.500,362.500 L1380,362.500 L1368.500,374 Z" fill="#747474"/><path d="M1376.500,370.500 L1382.500,376.5 M1382.500,370.500 L1376.500,376.500" stroke="#747474" stroke-width="1.3"/>
<path d="M1387.0,366.75 L1390.5,370.25 L1394.0,366.75" fill="none" stroke="#8a8a8a" stroke-width="1.3"/>
<path d="M1423.5,366.75 L1427,370.25 L1430.5,366.75" fill="none" stroke="#d0d0d0" stroke-width="1.3"/>
<rect x="1200.5" y="384.5" width="13" height="13" rx="1.5" fill="none" stroke="#c4c4c4" stroke-width="1.1"/><path d="M1200.5,391 L1213.5,391 M1203,387.8 L1205,387.800 M1203,394.2 L1205,394.200" stroke="#c4c4c4" stroke-width="1.1"/>
<path d="M1279.5,383.5 L1291.5,383.5 L1291.5,391 M1286,396.5 L1282.5,396.5 L1279.5,393.5 L1279.5,383.5" fill="none" stroke="#c4c4c4" stroke-width="1.2"/><circle cx="1290.5" cy="395.5" r="3.200" fill="#505050" stroke="#c4c4c4" stroke-width="1"/><path d="M1290.5,393.5 L1290.5,397.5 M1288.5,395.5 L1292.5,395.5" stroke="#c4c4c4" stroke-width="1"/>
<path d="M1299.5,383.5 L1311.5,383.5 L1311.5,391 M1306,396.5 L1302.5,396.5 L1299.5,393.5 L1299.5,383.5" fill="none" stroke="#c4c4c4" stroke-width="1.2"/><circle cx="1310.5" cy="395.5" r="3.200" fill="#505050" stroke="#c4c4c4" stroke-width="1"/><path d="M1310.5,393.5 L1310.5,397.5 M1308.5,395.5 L1312.5,395.5" stroke="#c4c4c4" stroke-width="1"/>
<path d="M1306,387.5 L1303,389 L1303,392.500 L1306,394 L1309,392.500 L1309,389 Z M1303,389 L1306,390.5 L1309,389 M1306,390.5 L1306,394" fill="none" stroke="#c4c4c4" stroke-width="0.9"/>
<path d="M1318.500,395.5 L1318.500,384.5 L1323.500,384.500 L1325,386.500 L1331.500,386.500 L1331.500,391" fill="#c4c4c4" stroke="#c4c4c4" stroke-width="1"/><path d="M1318.500,395.5 L1326,395.5" stroke="#c4c4c4" stroke-width="1"/><circle cx="1330.500" cy="395.5" r="3.2" fill="#505050" stroke="#c4c4c4" stroke-width="1"/><path d="M1330.500,393.500 L1330.500,397.5 M1328.500,395.5 L1332.5,395.500" stroke="#c4c4c4" stroke-width="1"/>
<rect x="1343.500" y="384.5" width="9" height="9" rx="1" fill="none" stroke="#747474" stroke-width="1.1"/><rect x="1338.5" y="389.500" width="9" height="9" rx="1" fill="#505050" stroke="#747474" stroke-width="1.100"/><path d="M1346,387 L1349.500,387 L1349.500,390.500 M1341,394 L1345,394 M1343,392 L1345,394 L1343,396" fill="none" stroke="#747474" stroke-width="1"/>
<rect x="1363.500" y="384.5" width="9" height="9" rx="1" fill="none" stroke="#dcdcdc" stroke-width="1.200"/><rect x="1358.500" y="389.500" width="9" height="9" rx="1" fill="#505050" stroke="#dcdcdc" stroke-width="1.200"/><path d="M1366.500,388.500 L1369,388.5 M1364,391.500 L1364,394.500 L1361,394.500" fill="none" stroke="#dcdcdc" stroke-width="1"/>
<rect x="1378" y="384" width="14" height="14" rx="1.5" fill="#c4c4c4"/><circle cx="1385" cy="391" r="4.3" fill="#2a2a2a"/>
<rect x="1397.500" y="385.500" width="8" height="8" rx="1" fill="none" stroke="#747474" stroke-width="1.100"/><rect x="1402" y="388" width="11" height="10" rx="1.5" fill="#747474"/><circle cx="1407.500" cy="393" r="2.6" fill="#505050"/><path d="M1399.500,389.500 L1402.500,389.500" stroke="#747474" stroke-width="1"/>
<path d="M1421.5,387.5 L1422.3,397.5 L1429.7,397.5 L1430.5,387.5 Z" fill="none" stroke="#c4c4c4" stroke-width="1.1"/><path d="M1420,386.5 L1432,386.5 M1424,386.5 L1424,384.8 L1428,384.8 L1428,386.5 M1424.3,389.5 L1424.3,395.5 M1426,389.5 L1426,395.5 M1427.7,389.5 L1427.7,395.5" fill="none" stroke="#c4c4c4" stroke-width="1"/>
<defs><pattern id="tchk" width="8" height="8" patternUnits="userSpaceOnUse" x="1244" y="1"><rect width="8" height="8" fill="#ffffff"/><rect width="4" height="4" fill="#d4d4d4"/><rect x="4" y="4" width="4" height="4" fill="#d4d4d4"/></pattern></defs>
<rect x="1242.800" y="408.5" width="32.400" height="33" fill="url(#tchk)" stroke="#1e1e1e" stroke-width="1"/>
<rect x="1267.5" y="434.9" width="0.9" height="6.1" fill="#cdbfa8"/><path d="M1267.9,423.3 C1270.72,423.3 1272.6000000000001,426.20 1272.6000000000001,428.52 C1272.6000000000001,431.71 1269.31,434.32 1267.9,434.90000000000003 C1266.49,434.32 1263.2,431.71 1263.2,428.52 C1263.2,426.20 1265.08,423.3 1267.9,423.3 Z" fill="#459fca"/>
<text x="1285" y="420" font-size="12" fill="#f0f0f0" text-anchor="start" textLength="52" lengthAdjust="spacingAndGlyphs">100 %通常</text>
<text x="1285" y="440" font-size="12" fill="#f0f0f0" text-anchor="start" textLength="43" lengthAdjust="spacingAndGlyphs">レイヤー8</text>
<path d="M1200,427.0 Q1207,413.6 1214,427.0" fill="none" stroke="#bcbcbc" stroke-width="1.7" stroke-linecap="round"/><circle cx="1207" cy="425.3" r="2.9" fill="#bcbcbc"/>
<rect x="1222.200" y="420.2" width="9.600" height="9.600" rx="2.200" fill="none" stroke="#2e2e2e" stroke-width="1.500"/>
<rect x="1242.800" y="449.5" width="32.400" height="33" fill="url(#tchk)" stroke="#1e1e1e" stroke-width="1"/>
<rect x="1255.6" y="474.2" width="0.9" height="7.8" fill="#cdbfa8"/><path d="M1256.0,465.59999999999997 C1257.98,465.59999999999997 1259.3,467.75 1259.3,469.47 C1259.3,471.83 1256.99,473.77 1256.0,474.2 C1255.01,473.77 1252.7,471.83 1252.7,469.47 C1252.7,467.75 1254.02,465.59999999999997 1256.0,465.59999999999997 Z" fill="#ff8022"/>
<text x="1285" y="461" font-size="12" fill="#f0f0f0" text-anchor="start" textLength="52" lengthAdjust="spacingAndGlyphs">100 %通常</text>
<text x="1285" y="481" font-size="12" fill="#f0f0f0" text-anchor="start" textLength="43" lengthAdjust="spacingAndGlyphs">レイヤー7</text>
<path d="M1200,468.0 Q1207,454.6 1214,468.0" fill="none" stroke="#bcbcbc" stroke-width="1.7" stroke-linecap="round"/><circle cx="1207" cy="466.3" r="2.9" fill="#bcbcbc"/>
<rect x="1222.200" y="461.2" width="9.600" height="9.600" rx="2.200" fill="none" stroke="#2e2e2e" stroke-width="1.500"/>
<rect x="1242.800" y="490.5" width="32.400" height="33" fill="url(#tchk)" stroke="#1e1e1e" stroke-width="1"/>
<rect x="1251.7" y="508.7" width="0.9" height="11.3" fill="#cdbfa8"/><path d="M1252.1,497.7 C1254.50,497.7 1256.1,500.45 1256.1,502.65 C1256.1,505.68 1253.30,508.15 1252.1,508.7 C1250.90,508.15 1248.1,505.68 1248.1,502.65 C1248.1,500.45 1249.70,497.7 1252.1,497.7 Z" fill="#b13a42"/>
<text x="1285" y="502" font-size="12" fill="#f0f0f0" text-anchor="start" textLength="52" lengthAdjust="spacingAndGlyphs">100 %通常</text>
<text x="1285" y="522" font-size="12" fill="#f0f0f0" text-anchor="start" textLength="43" lengthAdjust="spacingAndGlyphs">レイヤー6</text>
<path d="M1200,509.0 Q1207,495.6 1214,509.0" fill="none" stroke="#bcbcbc" stroke-width="1.7" stroke-linecap="round"/><circle cx="1207" cy="507.3" r="2.9" fill="#bcbcbc"/>
<rect x="1222.200" y="502.2" width="9.600" height="9.600" rx="2.200" fill="none" stroke="#2e2e2e" stroke-width="1.500"/>
<rect x="1242.800" y="531.5" width="32.400" height="33" fill="url(#tchk)" stroke="#1e1e1e" stroke-width="1"/>
<rect x="1262.5" y="553.3" width="0.9" height="9.2" fill="#cdbfa8"/><path d="M1262.9,545.9 C1264.58,545.9 1265.7,547.75 1265.7,549.23 C1265.7,551.26 1263.74,552.93 1262.9,553.3000000000001 C1262.06,552.93 1260.1000000000001,551.26 1260.1000000000001,549.23 C1260.1000000000001,547.75 1261.22,545.9 1262.9,545.9 Z" fill="#ffca5c"/>
<text x="1285" y="543" font-size="12" fill="#f0f0f0" text-anchor="start" textLength="52" lengthAdjust="spacingAndGlyphs">100 %通常</text>
<text x="1285" y="563" font-size="12" fill="#f0f0f0" text-anchor="start" textLength="43" lengthAdjust="spacingAndGlyphs">レイヤー5</text>
<path d="M1200,550.0 Q1207,536.6 1214,550.0" fill="none" stroke="#bcbcbc" stroke-width="1.7" stroke-linecap="round"/><circle cx="1207" cy="548.3" r="2.9" fill="#bcbcbc"/>
<rect x="1222.200" y="543.2" width="9.600" height="9.600" rx="2.200" fill="none" stroke="#2e2e2e" stroke-width="1.500"/>
<rect x="1242.800" y="572.5" width="32.400" height="33" fill="url(#tchk)" stroke="#1e1e1e" stroke-width="1"/>
<rect x="1263.4" y="587.6" width="0.9" height="12.4" fill="#cdbfa8"/><path d="M1263.8,577.4 C1265.90,577.4 1267.3,579.95 1267.3,581.99 C1267.3,584.79 1264.85,587.09 1263.8,587.6 C1262.75,587.09 1260.3,584.79 1260.3,581.99 C1260.3,579.95 1261.70,577.4 1263.8,577.4 Z" fill="#189a78"/>
<text x="1285" y="584" font-size="12" fill="#f0f0f0" text-anchor="start" textLength="52" lengthAdjust="spacingAndGlyphs">100 %通常</text>
<text x="1285" y="604" font-size="12" fill="#f0f0f0" text-anchor="start" textLength="43" lengthAdjust="spacingAndGlyphs">レイヤー4</text>
<path d="M1200,591.0 Q1207,577.6 1214,591.0" fill="none" stroke="#bcbcbc" stroke-width="1.7" stroke-linecap="round"/><circle cx="1207" cy="589.3" r="2.9" fill="#bcbcbc"/>
<rect x="1222.200" y="584.2" width="9.600" height="9.600" rx="2.200" fill="none" stroke="#2e2e2e" stroke-width="1.500"/>
<rect x="1242.800" y="613.5" width="32.400" height="33" fill="url(#tchk)" stroke="#1e1e1e" stroke-width="1"/>
<rect x="1269.8" y="630.0" width="0.9" height="11.0" fill="#cdbfa8"/><path d="M1270.2,621.4000000000001 C1272.24,621.4000000000001 1273.6000000000001,623.55 1273.6000000000001,625.27 C1273.6000000000001,627.63 1271.22,629.57 1270.2,630.0 C1269.18,629.57 1266.8,627.63 1266.8,625.27 C1266.8,623.55 1268.16,621.4000000000001 1270.2,621.4000000000001 Z" fill="#d95c78"/>
<text x="1285" y="625" font-size="12" fill="#f0f0f0" text-anchor="start" textLength="52" lengthAdjust="spacingAndGlyphs">100 %通常</text>
<text x="1285" y="645" font-size="12" fill="#f0f0f0" text-anchor="start" textLength="43" lengthAdjust="spacingAndGlyphs">レイヤー3</text>
<path d="M1200,632.0 Q1207,618.6 1214,632.0" fill="none" stroke="#bcbcbc" stroke-width="1.7" stroke-linecap="round"/><circle cx="1207" cy="630.3" r="2.9" fill="#bcbcbc"/>
<rect x="1222.200" y="625.2" width="9.600" height="9.600" rx="2.200" fill="none" stroke="#2e2e2e" stroke-width="1.500"/>
<rect x="1242.800" y="654.5" width="32.400" height="33" fill="url(#tchk)" stroke="#1e1e1e" stroke-width="1"/>
<rect x="1247.4" y="665.1" width="0.9" height="10.4" fill="#cdbfa8"/><path d="M1247.8,656.3000000000001 C1249.60,656.3000000000001 1250.8,658.50 1250.8,660.26 C1250.8,662.68 1248.70,664.66 1247.8,665.1 C1246.90,664.66 1244.8,662.68 1244.8,660.26 C1244.8,658.50 1246.00,656.3000000000001 1247.8,656.3000000000001 Z" fill="#5ec26a"/>
<text x="1285" y="666" font-size="12" fill="#f0f0f0" text-anchor="start" textLength="52" lengthAdjust="spacingAndGlyphs">100 %通常</text>
<text x="1285" y="686" font-size="12" fill="#f0f0f0" text-anchor="start" textLength="43" lengthAdjust="spacingAndGlyphs">レイヤー2</text>
<path d="M1200,673.0 Q1207,659.6 1214,673.0" fill="none" stroke="#bcbcbc" stroke-width="1.7" stroke-linecap="round"/><circle cx="1207" cy="671.3" r="2.9" fill="#bcbcbc"/>
<rect x="1222.200" y="666.2" width="9.600" height="9.600" rx="2.200" fill="none" stroke="#2e2e2e" stroke-width="1.500"/>
<rect x="1242.800" y="695.5" width="32.400" height="33" fill="url(#tchk)" stroke="#f4f4f4" stroke-width="1"/>
<rect x="1242.500" y="694.5" width="34" height="35" fill="none" stroke="#2c3040" stroke-width="1"/>
<rect x="1256.7" y="706.6" width="0.9" height="5.4" fill="#cdbfa8"/><path d="M1257.1,696.6 C1259.50,696.6 1261.1,699.10 1261.1,701.10 C1261.1,703.85 1258.30,706.10 1257.1,706.6 C1255.90,706.10 1253.1,703.85 1253.1,701.10 C1253.1,699.10 1254.70,696.6 1257.1,696.6 Z" fill="#857dda"/>
<text x="1285" y="707" font-size="12" fill="#f0f0f0" text-anchor="start" textLength="52" lengthAdjust="spacingAndGlyphs">100 %通常</text>
<text x="1285" y="727" font-size="12" fill="#f0f0f0" text-anchor="start" textLength="43" lengthAdjust="spacingAndGlyphs">レイヤー1</text>
<path d="M1200,714.0 Q1207,700.6 1214,714.0" fill="none" stroke="#1a1a1a" stroke-width="1.7" stroke-linecap="round"/><circle cx="1207" cy="712.3" r="2.9" fill="#1a1a1a"/>
<path d="M1222,714 L1229.500,705 L1232,707 L1224.500,716 L1221,717 Z" fill="#1a1a1a"/><path d="M1219.500,718.5 L1232.500,718.5" stroke="#1a1a1a" stroke-width="1.100"/>
<rect x="1242.800" y="736.5" width="32.400" height="33" fill="#ffffff" stroke="#1e1e1e" stroke-width="1"/>
<text x="1284" y="768" font-size="12.5" fill="#f0f0f0" text-anchor="start" textLength="24" lengthAdjust="spacingAndGlyphs">用紙</text>
<rect x="1289" y="751" width="17" height="2" fill="#e8e8e8"/>
<path d="M1200,755.0 Q1207,741.6 1214,755.0" fill="none" stroke="#bcbcbc" stroke-width="1.7" stroke-linecap="round"/><circle cx="1207" cy="753.3" r="2.9" fill="#bcbcbc"/>
<rect x="1222.200" y="748.2" width="9.600" height="9.600" rx="2.200" fill="none" stroke="#2e2e2e" stroke-width="1.500"/>
<rect x="1187.4" y="680.8" width="232.6" height="61.4" fill="none" stroke="#fe0000" stroke-width="20" stroke-linejoin="round"/>
<defs><clipPath id="cvclip"><rect x="452" y="192" width="510" height="510"/></clipPath><filter id="bl3" x="-80%" y="-80%" width="260%" height="260%"><feGaussianBlur stdDeviation="9"/></filter><filter id="bl2" x="-80%" y="-80%" width="260%" height="260%"><feGaussianBlur stdDeviation="5"/></filter><filter id="bl4" x="-80%" y="-80%" width="260%" height="260%"><feGaussianBlur stdDeviation="13"/></filter></defs>
<g clip-path="url(#cvclip)">
<path d="M669,378 C669.5,400 668,425 666.5,452" fill="none" stroke="#a99373" stroke-width="2.8" stroke-linecap="round"/><path d="M669,378 C669.5,400 668,425 666.5,452" fill="none" stroke="#8a7556" stroke-width="2.8" stroke-dasharray="1.2 1.6" opacity="0.45"/>
<defs><radialGradient id="bg1" gradientUnits="userSpaceOnUse" cx="656.2" cy="276.8" r="99.4"><stop offset="0" stop-color="#9088dc"/><stop offset="0.6" stop-color="#9088dc"/><stop offset="1" stop-color="#7870d2"/></radialGradient><clipPath id="bc1"><path d="M669,210 C704.3,210 733,240.9 733,279 C733,322.2 689.5,361.8 669,369 C648.5,361.8 605,322.2 605,279 C605,240.9 633.7,210 669,210 Z"/></clipPath></defs>
<path d="M663.75,367 L674.25,367 L673.2,374.25 L664.8,374.25 Z" fill="#a99373"/><rect x="662.7" y="373.725" width="12.6" height="5.25" rx="2.52" fill="#8078d8"/>
<path d="M669,210 C704.3,210 733,240.9 733,279 C733,322.2 689.5,361.8 669,369 C648.5,361.8 605,322.2 605,279 C605,240.9 633.7,210 669,210 Z" fill="url(#bg1)"/>
<g clip-path="url(#bc1)"><ellipse cx="690" cy="352" rx="70" ry="26" fill="#6d65ce" filter="url(#bl3)" opacity="0.95"/><ellipse cx="614" cy="282" rx="20" ry="55" fill="#b6b2ec" filter="url(#bl4)" opacity="0.9"/><ellipse cx="655" cy="312" rx="42" ry="13" fill="#b0ace8" filter="url(#bl3)" opacity="0.85" transform="rotate(8 655 312)"/><ellipse cx="640" cy="232" rx="26" ry="16" fill="#a8a4e6" filter="url(#bl3)" opacity="0.6"/></g>
<path d="M520,369 C522,400 511,440 512.5,475 C513.5,500 517,515 519,530.5" fill="none" stroke="#a99373" stroke-width="2.8" stroke-linecap="round"/><path d="M520,369 C522,400 511,440 512.5,475 C513.5,500 517,515 519,530.5" fill="none" stroke="#8a7556" stroke-width="2.8" stroke-dasharray="1.2 1.6" opacity="0.45"/>
<defs><radialGradient id="bg2" gradientUnits="userSpaceOnUse" cx="510.7" cy="279.6" r="87.7"><stop offset="0" stop-color="#66c672"/><stop offset="0.6" stop-color="#66c672"/><stop offset="1" stop-color="#58bc64"/></radialGradient><clipPath id="bc2"><path d="M520.3,220.7 C546.8,220.7 568.3,248.1 568.3,282 C568.3,323.1 535.7,354.7 520.3,361 C504.9,354.7 472.29999999999995,323.1 472.29999999999995,282 C472.29999999999995,248.1 493.8,220.7 520.3,220.7 Z"/></clipPath></defs>
<path d="M515.55,359 L525.05,359 L524.0999999999999,365.75 L516.5,365.75 Z" fill="#a99373"/><rect x="514.5999999999999" y="365.275" width="11.4" height="4.75" rx="2.28" fill="#66c672"/>
<path d="M520.3,220.7 C546.8,220.7 568.3,248.1 568.3,282 C568.3,323.1 535.7,354.7 520.3,361 C504.9,354.7 472.29999999999995,323.1 472.29999999999995,282 C472.29999999999995,248.1 493.8,220.7 520.3,220.7 Z" fill="url(#bg2)"/>
<g clip-path="url(#bc2)"><ellipse cx="485" cy="285" rx="18" ry="50" fill="#b8e6be" filter="url(#bl4)" opacity="0.95"/><ellipse cx="505" cy="245" rx="34" ry="20" fill="#84d08e" filter="url(#bl3)" opacity="0.7"/><ellipse cx="545" cy="330" rx="32" ry="36" fill="#5abf66" filter="url(#bl3)" opacity="0.7"/></g>
<path d="M878.5,585 L889.5,632.5" fill="none" stroke="#a99373" stroke-width="2.8" stroke-linecap="round"/><path d="M878.5,585 L889.5,632.5" fill="none" stroke="#8a7556" stroke-width="2.8" stroke-dasharray="1.2 1.6" opacity="0.45"/>
<defs><radialGradient id="bg3" gradientUnits="userSpaceOnUse" cx="867.6" cy="376.0" r="86.2"><stop offset="0" stop-color="#da627c"/><stop offset="0.6" stop-color="#da627c"/><stop offset="1" stop-color="#cf4c64"/></radialGradient><clipPath id="bc3"><path d="M878.3,318 C908.0,318 932.0,347.1 932.0,383 C932.0,419.5 896.6,450.2 878.3,456 C860.0,450.2 824.5999999999999,419.5 824.5999999999999,383 C824.5999999999999,347.1 848.6,318 878.3,318 Z"/></clipPath></defs>
<path d="M878.3,318 C908.0,318 932.0,347.1 932.0,383 C932.0,419.5 896.6,450.2 878.3,456 C860.0,450.2 824.5999999999999,419.5 824.5999999999999,383 C824.5999999999999,347.1 848.6,318 878.3,318 Z" fill="url(#bg3)"/>
<g clip-path="url(#bc3)"><ellipse cx="912" cy="425" rx="28" ry="50" fill="#cd465e" filter="url(#bl3)" opacity="0.75"/><ellipse cx="840" cy="385" rx="18" ry="42" fill="#eaa6b6" filter="url(#bl4)" opacity="0.9"/><ellipse cx="862" cy="398" rx="34" ry="11" fill="#e8a0b0" filter="url(#bl3)" opacity="0.9" transform="rotate(-5 862 398)"/><ellipse cx="858" cy="345" rx="26" ry="16" fill="#e07c92" filter="url(#bl3)" opacity="0.6"/></g>
<path d="M783.5,560 C783,585 779,610 775,633" fill="none" stroke="#a99373" stroke-width="2.8" stroke-linecap="round"/><path d="M783.5,560 C783,585 779,610 775,633" fill="none" stroke="#8a7556" stroke-width="2.8" stroke-dasharray="1.2 1.6" opacity="0.45"/>
<defs><radialGradient id="bg4" gradientUnits="userSpaceOnUse" cx="764.4" cy="338.9" r="102.5"><stop offset="0" stop-color="#1a9b79"/><stop offset="0.6" stop-color="#1a9b79"/><stop offset="1" stop-color="#10805e"/></radialGradient><clipPath id="bc4"><path d="M775.6,270 C806.5,270 831.6,302.2 831.6,342 C831.6,395.4 799.1,426.6 775.6,434 C752.1,426.6 719.6,395.4 719.6,342 C719.6,302.2 744.7,270 775.6,270 Z"/></clipPath></defs>
<path d="M775.6,270 C806.5,270 831.6,302.2 831.6,342 C831.6,395.4 799.1,426.6 775.6,434 C752.1,426.6 719.6,395.4 719.6,342 C719.6,302.2 744.7,270 775.6,270 Z" fill="url(#bg4)"/>
<g clip-path="url(#bc4)"><ellipse cx="800" cy="425" rx="70" ry="34" fill="#0c7554" filter="url(#bl4)" opacity="0.95"/><ellipse cx="728" cy="350" rx="12" ry="40" fill="#66bca6" filter="url(#bl3)" opacity="0.95"/><ellipse cx="824" cy="360" rx="9" ry="50" fill="#0f7c5c" filter="url(#bl3)" opacity="0.8"/></g>
<path d="M761,545 C762,570 752,600 754.5,630 C756,655 758.5,670 760,686.5" fill="none" stroke="#a99373" stroke-width="2.8" stroke-linecap="round"/><path d="M761,545 C762,570 752,600 754.5,630 C756,655 758.5,670 760,686.5" fill="none" stroke="#8a7556" stroke-width="2.8" stroke-dasharray="1.2 1.6" opacity="0.45"/>
<defs><radialGradient id="bg5" gradientUnits="userSpaceOnUse" cx="752.1" cy="471.1" r="73.1"><stop offset="0" stop-color="#ffcb5f"/><stop offset="0.6" stop-color="#ffcb5f"/><stop offset="1" stop-color="#ffc450"/></radialGradient><clipPath id="bc5"><path d="M761,422 C785.5,422 805.4,442.6 805.4,468 C805.4,504.9 776.1,533.3 761,539 C745.9,533.3 716.6,504.9 716.6,468 C716.6,442.6 736.5,422 761,422 Z"/></clipPath></defs>
<path d="M757.9,537 L764.1,537 L763.48,542.1 L758.52,542.1 Z" fill="#a99373"/><rect x="757.28" y="541.79" width="7.4399999999999995" height="3.1" rx="1.488" fill="#ffcb5f"/>
<path d="M761,422 C785.5,422 805.4,442.6 805.4,468 C805.4,504.9 776.1,533.3 761,539 C745.9,533.3 716.6,504.9 716.6,468 C716.6,442.6 736.5,422 761,422 Z" fill="url(#bg5)"/>
<g clip-path="url(#bc5)"><ellipse cx="731" cy="470" rx="16" ry="42" fill="#ffecc0" filter="url(#bl4)" opacity="0.95"/></g>
<path d="M589,490 C591,520 596,545 594,575 C592,610 585,635 579.5,660.5" fill="none" stroke="#a99373" stroke-width="2.8" stroke-linecap="round"/><path d="M589,490 C591,520 596,545 594,575 C592,610 585,635 579.5,660.5" fill="none" stroke="#8a7556" stroke-width="2.8" stroke-dasharray="1.2 1.6" opacity="0.45"/>
<defs><radialGradient id="bg6" gradientUnits="userSpaceOnUse" cx="576.6" cy="380.4" r="109.5"><stop offset="0" stop-color="#b63d45"/><stop offset="0.6" stop-color="#b63d45"/><stop offset="1" stop-color="#a62c34"/></radialGradient><clipPath id="bc6"><path d="M589.3,306.8 C624.3,306.8 652.5999999999999,340.0 652.5999999999999,381 C652.5999999999999,427.5 609.6,473.9 589.3,482 C569.0,473.9 526.0,427.5 526.0,381 C526.0,340.0 554.3,306.8 589.3,306.8 Z"/></clipPath></defs>
<path d="M583.8,480 L594.8,480 L593.6999999999999,487.5 L584.9,487.5 Z" fill="#a99373"/><rect x="582.6999999999999" y="486.95" width="13.2" height="5.5" rx="2.64" fill="#c0394a"/>
<path d="M589.3,306.8 C624.3,306.8 652.5999999999999,340.0 652.5999999999999,381 C652.5999999999999,427.5 609.6,473.9 589.3,482 C569.0,473.9 526.0,427.5 526.0,381 C526.0,340.0 554.3,306.8 589.3,306.8 Z" fill="url(#bg6)"/>
<g clip-path="url(#bc6)"><ellipse cx="600" cy="455" rx="62" ry="30" fill="#a62d35" filter="url(#bl3)" opacity="0.8"/><ellipse cx="549" cy="385" rx="24" ry="34" fill="#d47e86" filter="url(#bl4)" opacity="0.95"/><ellipse cx="640" cy="400" rx="12" ry="60" fill="#a42a32" filter="url(#bl3)" opacity="0.7"/></g>
<path d="M651.5,593 C653,615 659,640 659.500,665 C660,680 659,692 658.500,703" fill="none" stroke="#a99373" stroke-width="2.8" stroke-linecap="round"/><path d="M651.5,593 C653,615 659,640 659.500,665 C660,680 659,692 658.500,703" fill="none" stroke="#8a7556" stroke-width="2.8" stroke-dasharray="1.2 1.6" opacity="0.45"/>
<defs><radialGradient id="bg7" gradientUnits="userSpaceOnUse" cx="641.3" cy="507.8" r="85.4"><stop offset="0" stop-color="#ff8826"/><stop offset="0.6" stop-color="#ff8826"/><stop offset="1" stop-color="#ff7418"/></radialGradient><clipPath id="bc7"><path d="M651.7,450.4 C680.4,450.4 703.7,475.7 703.7,507 C703.7,548.6 669.4,580.6 651.7,587 C634.0,580.6 599.7,548.6 599.7,507 C599.7,475.7 623.0,450.4 651.7,450.4 Z"/></clipPath></defs>
<path d="M648.4000000000001,585 L655.0,585 L654.34,590.3 L649.0600000000001,590.3 Z" fill="#a99373"/><rect x="647.74" y="589.97" width="7.92" height="3.3000000000000003" rx="1.584" fill="#ff8826"/>
<path d="M651.7,450.4 C680.4,450.4 703.7,475.7 703.7,507 C703.7,548.6 669.4,580.6 651.7,587 C634.0,580.6 599.7,548.6 599.7,507 C599.7,475.7 623.0,450.4 651.7,450.4 Z" fill="url(#bg7)"/>
<g clip-path="url(#bc7)"><ellipse cx="668" cy="562" rx="50" ry="26" fill="#ff7018" filter="url(#bl3)" opacity="0.85"/><ellipse cx="614" cy="500" rx="16" ry="38" fill="#ffae66" filter="url(#bl4)" opacity="0.9"/><ellipse cx="640" cy="478" rx="30" ry="18" fill="#ff9436" filter="url(#bl3)" opacity="0.6"/></g>
<path d="M841.5,624 C840.5,650 841,680 843.5,703" fill="none" stroke="#a99373" stroke-width="2.8" stroke-linecap="round"/><path d="M841.5,624 C840.5,650 841,680 843.5,703" fill="none" stroke="#8a7556" stroke-width="2.8" stroke-dasharray="1.2 1.6" opacity="0.45"/>
<defs><radialGradient id="bg8" gradientUnits="userSpaceOnUse" cx="825.9" cy="505.4" r="115.9"><stop offset="0" stop-color="#4fa7c9"/><stop offset="0.6" stop-color="#4fa7c9"/><stop offset="1" stop-color="#3b8dba"/></radialGradient><clipPath id="bc8"><path d="M841,427.5 C882.6,427.5 916.4,463.5 916.4,508 C916.4,566.8 868.1,604.6 841,613 C813.9,604.6 765.6,566.8 765.6,508 C765.6,463.5 799.4,427.5 841,427.5 Z"/></clipPath></defs>
<path d="M834.25,611 L847.75,611 L846.4,619.75 L835.6,619.75 Z" fill="#a99373"/><rect x="832.9" y="619.075" width="16.2" height="6.75" rx="3.24" fill="#3d9fd0"/>
<path d="M841,427.5 C882.6,427.5 916.4,463.5 916.4,508 C916.4,566.8 868.1,604.6 841,613 C813.9,604.6 765.6,566.8 765.6,508 C765.6,463.5 799.4,427.5 841,427.5 Z" fill="url(#bg8)"/>
<g clip-path="url(#bc8)"><ellipse cx="865" cy="598" rx="90" ry="36" fill="#3889b7" filter="url(#bl4)" opacity="0.9"/><ellipse cx="782" cy="500" rx="24" ry="64" fill="#b4dce8" filter="url(#bl4)" opacity="0.95"/><ellipse cx="853" cy="512" rx="20" ry="24" fill="#62b2ce" filter="url(#bl3)" opacity="0.8"/><ellipse cx="905" cy="510" rx="12" ry="70" fill="#3a8cb8" filter="url(#bl3)" opacity="0.7"/></g>
</g>
</svg>
</div>
</body></html>
